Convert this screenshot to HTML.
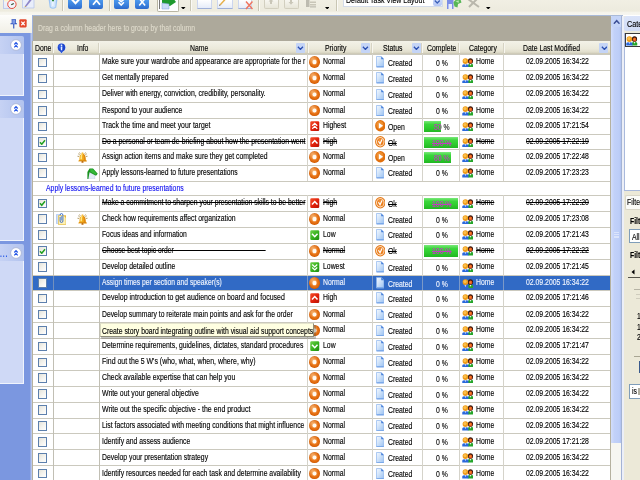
<!DOCTYPE html>
<html><head><meta charset="utf-8"><title>Task View</title>
<style>
html,body{margin:0;padding:0}
body{width:640px;height:480px;overflow:hidden;position:relative;background:#fff;font-family:"Liberation Sans",sans-serif}
.b{position:absolute;display:block}
.t{position:absolute;white-space:pre;font-size:9.0px;line-height:10.0px;transform-origin:0 0;transform:scaleX(0.762);-webkit-text-stroke:.14px}
.s{text-decoration:line-through;text-decoration-thickness:.55px}
.pn{width:10.6px;height:11.6px;border-radius:50%;background:radial-gradient(circle at 30% 26%,rgba(255,225,180,.5),rgba(255,255,255,0) 50%),radial-gradient(closest-side,#fff 0,#fff 30%,#f3a25c 40%,#e9761a 55%,#e0680a 82%,#cf5c07 100%)}
.dc{width:7.2px;height:10.8px;border:.6px solid #6f9fe6;background:linear-gradient(135deg,#f4f9ff 0,#d4e6fa 50%,#9cc3f2 100%)}
.dc i{position:absolute;right:-.6px;top:-.6px;width:0;height:0;border-style:solid;border-width:0 0 3.4px 3.4px;border-color:transparent transparent #5c8fe0 transparent;background:linear-gradient(45deg,transparent 50%,#fff 50%)}
.cb{width:6.8px;height:7.7px;border:1px solid #5d80ad;background:linear-gradient(135deg,#e4e3da 0,#f4f3ee 50%,#fff 100%)}
.fb{width:9px;height:9.5px;background:#c4d4f6;border-radius:1px}
#r{position:absolute;left:0;top:0;width:640px;height:480px;overflow:hidden;will-change:transform;filter:blur(.35px)}
</style></head><body><div id="r">

<div class="b" style="left:0.00px;top:0.00px;width:640.00px;height:10.50px;background:linear-gradient(#f1efe4,#edebde);"></div>
<div class="b" style="left:0.00px;top:10.50px;width:640.00px;height:4.80px;background:linear-gradient(#edebde,#f5f4ec 35%,#f7f6f0);"></div>
<div class="b" style="left:0.00px;top:15.00px;width:32.00px;height:17.50px;background:linear-gradient(#fdfdfb,#f1efe6);"></div>
<div class="b" style="left:0.00px;top:32.50px;width:32.50px;height:448.00px;background:#7b97e0;"></div>
<div class="b" style="left:30.30px;top:32.50px;width:2.20px;height:448.00px;background:linear-gradient(90deg,#8aa2e4,#c9d3ee);"></div>
<div class="b" style="left:0.00px;top:35.50px;width:24.00px;height:18.50px;background:linear-gradient(90deg,#c6d2f4,#b2c3ee);border-radius:0 2px 0 0"></div>
<div class="b" style="left:0.00px;top:54.00px;width:24.00px;height:42.00px;background:#cfd9f6;border-right:1px solid #f0f4fd;border-bottom:1px solid #f0f4fd;box-sizing:border-box"></div>
<div class="b" style="left:0.00px;top:99.50px;width:24.00px;height:18.50px;background:linear-gradient(90deg,#c6d2f4,#b2c3ee);border-radius:0 2px 0 0"></div>
<div class="b" style="left:0.00px;top:118.00px;width:24.00px;height:122.60px;background:#cfd9f6;border-right:1px solid #f0f4fd;border-bottom:1px solid #f0f4fd;box-sizing:border-box"></div>
<div class="b" style="left:0.00px;top:243.50px;width:24.00px;height:17.80px;background:linear-gradient(90deg,#c6d2f4,#b2c3ee);border-radius:0 2px 0 0"></div>
<div class="b" style="left:0.00px;top:261.30px;width:24.00px;height:122.70px;background:#cfd9f6;border-right:1px solid #f0f4fd;border-bottom:1px solid #f0f4fd;box-sizing:border-box"></div>
<svg class="b" style="left:10.00px;top:39.00px" width="12" height="12" viewBox="0 0 24 24"><circle cx="12" cy="12" r="10.8" fill="#fff" stroke="#aab6d6" stroke-width="1.8"/><path d="M8.6 11 L12 7.2 L15.4 11 M8.6 16.6 L12 12.8 L15.4 16.6" fill="none" stroke="#2557e6" stroke-width="2.3"/></svg>
<svg class="b" style="left:10.00px;top:103.00px" width="12" height="12" viewBox="0 0 24 24"><circle cx="12" cy="12" r="10.8" fill="#fff" stroke="#aab6d6" stroke-width="1.8"/><path d="M8.6 11 L12 7.2 L15.4 11 M8.6 16.6 L12 12.8 L15.4 16.6" fill="none" stroke="#2557e6" stroke-width="2.3"/></svg>
<svg class="b" style="left:10.00px;top:247.00px" width="12" height="12" viewBox="0 0 24 24"><circle cx="12" cy="12" r="10.8" fill="#fff" stroke="#aab6d6" stroke-width="1.8"/><path d="M8.6 11 L12 7.2 L15.4 11 M8.6 16.6 L12 12.8 L15.4 16.6" fill="none" stroke="#2557e6" stroke-width="2.3"/></svg>
<span class="t" style="left:0.30px;top:249.28px;color:#2557e6;letter-spacing:1.1px;-webkit-text-stroke:0;font-weight:bold">...</span>
<svg class="b" style="left:9.50px;top:18.50px" width="7.5" height="10" viewBox="0 0 15 20"><path d="M3 1.5 L12 1.5 M4.5 2 L4.5 9 M10.5 2 L10.5 9 M1 9.5 L14 9.5 M7.5 10 L7.5 19" stroke="#2b4fc0" stroke-width="2.2" fill="none"/><rect x="5" y="2" width="5" height="7" fill="#7e9ae6"/></svg>
<svg class="b" style="left:19.30px;top:19.30px" width="8" height="8.6" viewBox="0 0 18 20"><rect x=".5" y=".5" width="17" height="19" rx="2.5" fill="#e4472b"/><path d="M5 6 L13 14.5 M13 6 L5 14.5" stroke="#fff" stroke-width="2.8"/></svg>
<div class="b" style="left:32.00px;top:14.80px;width:591.00px;height:26.70px;background:#ada99b;border-top:1px solid #a9bad8;border-left:1px solid #9fb2dc;box-sizing:border-box"></div>
<span class="t" style="left:38.00px;top:23.38px;color:#dedacb;">Drag a column header here to group by that column</span>
<div class="b" style="left:33.00px;top:41.00px;width:578.00px;height:13.40px;background:linear-gradient(#f3f2e8,#ebe9da 60%,#e0ddcb 85%,#c9c5b2);"></div>
<div class="b" style="left:52.00px;top:43.00px;width:1.00px;height:9.50px;background:#d6d3c3;"></div>
<div class="b" style="left:53.00px;top:43.00px;width:1.00px;height:9.50px;background:#f7f6ef;"></div>
<div class="b" style="left:97.80px;top:43.00px;width:1.00px;height:9.50px;background:#d6d3c3;"></div>
<div class="b" style="left:98.80px;top:43.00px;width:1.00px;height:9.50px;background:#f7f6ef;"></div>
<div class="b" style="left:307.10px;top:43.00px;width:1.00px;height:9.50px;background:#d6d3c3;"></div>
<div class="b" style="left:308.10px;top:43.00px;width:1.00px;height:9.50px;background:#f7f6ef;"></div>
<div class="b" style="left:371.10px;top:43.00px;width:1.00px;height:9.50px;background:#d6d3c3;"></div>
<div class="b" style="left:372.10px;top:43.00px;width:1.00px;height:9.50px;background:#f7f6ef;"></div>
<div class="b" style="left:421.10px;top:43.00px;width:1.00px;height:9.50px;background:#d6d3c3;"></div>
<div class="b" style="left:422.10px;top:43.00px;width:1.00px;height:9.50px;background:#f7f6ef;"></div>
<div class="b" style="left:458.40px;top:43.00px;width:1.00px;height:9.50px;background:#d6d3c3;"></div>
<div class="b" style="left:459.40px;top:43.00px;width:1.00px;height:9.50px;background:#f7f6ef;"></div>
<div class="b" style="left:503.20px;top:43.00px;width:1.00px;height:9.50px;background:#d6d3c3;"></div>
<div class="b" style="left:504.20px;top:43.00px;width:1.00px;height:9.50px;background:#f7f6ef;"></div>
<span class="t" style="left:34.60px;top:43.48px;color:#000;">Done</span>
<span class="t" style="left:76.90px;top:43.48px;color:#000;">Info</span>
<span class="t" style="left:190.00px;top:43.48px;color:#000;">Name</span>
<span class="t" style="left:324.50px;top:43.48px;color:#000;">Priority</span>
<span class="t" style="left:382.50px;top:43.48px;color:#000;">Status</span>
<span class="t" style="left:427.30px;top:43.48px;color:#000;">Complete</span>
<span class="t" style="left:469.20px;top:43.48px;color:#000;">Category</span>
<span class="t" style="left:523.20px;top:43.48px;color:#000;">Date Last Modified</span>
<div class="b fb" style="left:296.00px;top:43.00px"></div>
<svg class="b" style="left:297.20px;top:45.80px" width="6.8" height="4.6" viewBox="0 0 13.6 9.2"><path d="M1.8 1.6 L6.8 6.8 L11.8 1.6" fill="none" stroke="#2a4fb0" stroke-width="2.7"/></svg>
<div class="b fb" style="left:361.00px;top:43.00px"></div>
<svg class="b" style="left:362.20px;top:45.80px" width="6.8" height="4.6" viewBox="0 0 13.6 9.2"><path d="M1.8 1.6 L6.8 6.8 L11.8 1.6" fill="none" stroke="#2a4fb0" stroke-width="2.7"/></svg>
<div class="b fb" style="left:411.60px;top:43.00px"></div>
<svg class="b" style="left:412.80px;top:45.80px" width="6.8" height="4.6" viewBox="0 0 13.6 9.2"><path d="M1.8 1.6 L6.8 6.8 L11.8 1.6" fill="none" stroke="#2a4fb0" stroke-width="2.7"/></svg>
<div class="b fb" style="left:599.30px;top:43.00px"></div>
<svg class="b" style="left:600.50px;top:45.80px" width="6.8" height="4.6" viewBox="0 0 13.6 9.2"><path d="M1.8 1.6 L6.8 6.8 L11.8 1.6" fill="none" stroke="#2a4fb0" stroke-width="2.7"/></svg>
<svg class="b" style="left:55.50px;top:41.80px" width="11" height="12.4" viewBox="0 0 22 24.8"><path d="M11 .5 L21 11.5 L11 24 L1 11.5 Z" fill="#dfe8fb" opacity=".9"/><ellipse cx="11" cy="11" rx="7.6" ry="8" fill="#1c44cc"/><path d="M7 17 L11 23 L15 17 Z" fill="#2a55d6"/><ellipse cx="9.5" cy="9" rx="4.5" ry="5" fill="#3f6be6" opacity=".7"/><rect x="9.6" y="9" width="2.9" height="7.5" rx="1" fill="#e8f0ff"/><rect x="9.6" y="5" width="2.9" height="2.8" rx="1" fill="#e8f0ff"/></svg>
<div class="b" style="left:32.50px;top:54.40px;width:578.00px;height:426.00px;background:#fff;"></div>
<div class="b" style="left:33.00px;top:275.80px;width:577.50px;height:14.60px;background:#316ac5;"></div>
<div class="b" style="left:32.50px;top:54.00px;width:578.00px;height:1.00px;background:#cbc9be;"></div>
<div class="b" style="left:32.50px;top:70.00px;width:578.00px;height:1.00px;background:#cbc9be;"></div>
<div class="b" style="left:32.50px;top:86.00px;width:578.00px;height:1.00px;background:#cbc9be;"></div>
<div class="b" style="left:32.50px;top:102.00px;width:578.00px;height:1.00px;background:#cbc9be;"></div>
<div class="b" style="left:32.50px;top:118.00px;width:578.00px;height:1.00px;background:#cbc9be;"></div>
<div class="b" style="left:32.50px;top:134.00px;width:578.00px;height:1.00px;background:#cbc9be;"></div>
<div class="b" style="left:32.50px;top:149.00px;width:578.00px;height:1.00px;background:#cbc9be;"></div>
<div class="b" style="left:32.50px;top:165.00px;width:578.00px;height:1.00px;background:#cbc9be;"></div>
<div class="b" style="left:32.50px;top:181.00px;width:578.00px;height:1.00px;background:#cbc9be;"></div>
<div class="b" style="left:32.50px;top:195.00px;width:578.00px;height:1.00px;background:#cbc9be;"></div>
<div class="b" style="left:32.50px;top:211.00px;width:578.00px;height:1.00px;background:#cbc9be;"></div>
<div class="b" style="left:32.50px;top:227.00px;width:578.00px;height:1.00px;background:#cbc9be;"></div>
<div class="b" style="left:32.50px;top:243.00px;width:578.00px;height:1.00px;background:#cbc9be;"></div>
<div class="b" style="left:32.50px;top:259.00px;width:578.00px;height:1.00px;background:#cbc9be;"></div>
<div class="b" style="left:32.50px;top:275.00px;width:578.00px;height:1.00px;background:#cbc9be;"></div>
<div class="b" style="left:32.50px;top:290.00px;width:578.00px;height:1.00px;background:#cbc9be;"></div>
<div class="b" style="left:32.50px;top:306.00px;width:578.00px;height:1.00px;background:#cbc9be;"></div>
<div class="b" style="left:32.50px;top:322.00px;width:578.00px;height:1.00px;background:#cbc9be;"></div>
<div class="b" style="left:32.50px;top:338.00px;width:578.00px;height:1.00px;background:#cbc9be;"></div>
<div class="b" style="left:32.50px;top:354.00px;width:578.00px;height:1.00px;background:#cbc9be;"></div>
<div class="b" style="left:32.50px;top:370.00px;width:578.00px;height:1.00px;background:#cbc9be;"></div>
<div class="b" style="left:32.50px;top:386.00px;width:578.00px;height:1.00px;background:#cbc9be;"></div>
<div class="b" style="left:32.50px;top:402.00px;width:578.00px;height:1.00px;background:#cbc9be;"></div>
<div class="b" style="left:32.50px;top:418.00px;width:578.00px;height:1.00px;background:#cbc9be;"></div>
<div class="b" style="left:32.50px;top:433.00px;width:578.00px;height:1.00px;background:#cbc9be;"></div>
<div class="b" style="left:32.50px;top:449.00px;width:578.00px;height:1.00px;background:#cbc9be;"></div>
<div class="b" style="left:32.50px;top:465.00px;width:578.00px;height:1.00px;background:#cbc9be;"></div>
<div class="b" style="left:32.50px;top:481.00px;width:578.00px;height:1.00px;background:#cbc9be;"></div>
<div class="b" style="left:32.00px;top:41.00px;width:1.00px;height:440.00px;background:#b5b19f;"></div>
<div class="b" style="left:53.00px;top:54.40px;width:1.00px;height:126.70px;background:#c1bfb4;"></div>
<div class="b" style="left:53.00px;top:195.40px;width:1.00px;height:284.60px;background:#c1bfb4;"></div>
<div class="b" style="left:99.00px;top:54.40px;width:1.00px;height:126.70px;background:#c1bfb4;"></div>
<div class="b" style="left:99.00px;top:195.40px;width:1.00px;height:284.60px;background:#c1bfb4;"></div>
<div class="b" style="left:307.00px;top:54.40px;width:1.00px;height:126.70px;background:#d5d3ca;"></div>
<div class="b" style="left:307.00px;top:195.40px;width:1.00px;height:284.60px;background:#d5d3ca;"></div>
<div class="b" style="left:372.00px;top:54.40px;width:1.00px;height:126.70px;background:#d5d3ca;"></div>
<div class="b" style="left:372.00px;top:195.40px;width:1.00px;height:284.60px;background:#d5d3ca;"></div>
<div class="b" style="left:422.00px;top:54.40px;width:1.00px;height:126.70px;background:#d5d3ca;"></div>
<div class="b" style="left:422.00px;top:195.40px;width:1.00px;height:284.60px;background:#d5d3ca;"></div>
<div class="b" style="left:459.00px;top:54.40px;width:1.00px;height:126.70px;background:#d5d3ca;"></div>
<div class="b" style="left:459.00px;top:195.40px;width:1.00px;height:284.60px;background:#d5d3ca;"></div>
<div class="b" style="left:503.00px;top:54.40px;width:1.00px;height:126.70px;background:#d5d3ca;"></div>
<div class="b" style="left:503.00px;top:195.40px;width:1.00px;height:284.60px;background:#d5d3ca;"></div>
<div class="b" style="left:610.00px;top:54.40px;width:1.00px;height:126.70px;background:#d5d3ca;"></div>
<div class="b" style="left:610.00px;top:195.40px;width:1.00px;height:284.60px;background:#d5d3ca;"></div>
<div class="b" style="left:610.00px;top:41.00px;width:1.00px;height:440.00px;background:#b5b19f;"></div>
<div class="b" style="left:53.00px;top:276.30px;width:1.00px;height:14.10px;background:rgba(49,106,197,.55);"></div>
<div class="b" style="left:99.00px;top:276.30px;width:1.00px;height:14.10px;background:rgba(49,106,197,.55);"></div>
<div class="b" style="left:307.00px;top:276.30px;width:1.00px;height:14.10px;background:rgba(49,106,197,.55);"></div>
<div class="b" style="left:372.00px;top:276.30px;width:1.00px;height:14.10px;background:rgba(49,106,197,.55);"></div>
<div class="b" style="left:422.00px;top:276.30px;width:1.00px;height:14.10px;background:rgba(49,106,197,.55);"></div>
<div class="b" style="left:459.00px;top:276.30px;width:1.00px;height:14.10px;background:rgba(49,106,197,.55);"></div>
<div class="b" style="left:503.00px;top:276.30px;width:1.00px;height:14.10px;background:rgba(49,106,197,.55);"></div>
<span class="t" style="left:46.20px;top:183.38px;color:#1414f0;">Apply lessons-learned to future presentations</span>
<div class="b cb" style="left:38.20px;top:57.50px"></div>
<span class="t" style="left:101.90px;top:56.28px;color:#000;transform:scaleX(0.7628);">Make sure your wardrobe and appearance are appropriate for the r</span>
<div class="b pn" style="left:309.40px;top:56.30px"></div>
<span class="t" style="left:323.00px;top:56.28px;color:#000;">Normal</span>
<svg class="b" style="left:376.00px;top:56.30px" width="8.4" height="11.6" viewBox="0 0 16.8 23.2"><linearGradient id="d376_56" x1="0" y1="0" x2="1" y2="1"><stop offset="0" stop-color="#f4f9ff"/><stop offset=".4" stop-color="#d3e5fa"/><stop offset="1" stop-color="#98c0f1"/></linearGradient><path d="M1 1 L10.5 1 L15.8 6.5 L15.8 22.2 L1 22.2 Z" fill="url(#d376_56)" stroke="#8db4ec" stroke-width="1.4"/><path d="M10.5 1 L15.8 6.5 L10.5 6.5 Z" fill="#3f7bd8"/><path d="M1.5 21.6 L15.3 21.6" stroke="#5d93e2" stroke-width="1.6"/></svg>
<span class="t" style="left:387.60px;top:57.78px;color:#000;">Created</span>
<span class="t" style="left:435.60px;top:57.78px;color:#000;">0 %</span>
<svg class="b" style="left:461.70px;top:57.70px" width="11.5" height="9.6" viewBox="0 0 23 19.2"><path d="M11.5 19 L11.5 15 Q11.5 11.5 17 11.5 Q22.5 11.5 22.5 15 L22.5 19 Z" fill="#25a52a"/><path d="M15.3 12 L17 15.5 L18.7 12 Z" fill="#e8f6e8"/><ellipse cx="17" cy="6" rx="5.2" ry="5.7" fill="#34160a"/><ellipse cx="17.2" cy="7.2" rx="3.4" ry="4" fill="#e5561a"/><ellipse cx="16.6" cy="6.4" rx="1.8" ry="2.1" fill="#f4842e"/><path d="M.5 19 L.5 15.5 Q.5 12 6.8 12 Q13 12 13 15.5 L13 19 Z" fill="#2a68dc"/><path d="M5 12.4 L6.8 16.2 L8.6 12.4 Z" fill="#e6eefc"/><ellipse cx="6.8" cy="6.2" rx="5.6" ry="5.9" fill="#ee9a18"/><ellipse cx="6" cy="5.2" rx="3.2" ry="3.4" fill="#fbc04c"/></svg>
<span class="t" style="left:475.60px;top:56.28px;color:#000;">Home</span>
<span class="t" style="left:525.60px;top:56.28px;color:#000;">02.09.2005 16:34:22</span>
<div class="b cb" style="left:38.20px;top:73.50px"></div>
<span class="t" style="left:101.90px;top:72.28px;color:#000;transform:scaleX(0.7479);">Get mentally prepared</span>
<div class="b pn" style="left:309.40px;top:72.30px"></div>
<span class="t" style="left:323.00px;top:72.28px;color:#000;">Normal</span>
<svg class="b" style="left:376.00px;top:72.30px" width="8.4" height="11.6" viewBox="0 0 16.8 23.2"><linearGradient id="d376_72" x1="0" y1="0" x2="1" y2="1"><stop offset="0" stop-color="#f4f9ff"/><stop offset=".4" stop-color="#d3e5fa"/><stop offset="1" stop-color="#98c0f1"/></linearGradient><path d="M1 1 L10.5 1 L15.8 6.5 L15.8 22.2 L1 22.2 Z" fill="url(#d376_72)" stroke="#8db4ec" stroke-width="1.4"/><path d="M10.5 1 L15.8 6.5 L10.5 6.5 Z" fill="#3f7bd8"/><path d="M1.5 21.6 L15.3 21.6" stroke="#5d93e2" stroke-width="1.6"/></svg>
<span class="t" style="left:387.60px;top:73.78px;color:#000;">Created</span>
<span class="t" style="left:435.60px;top:73.78px;color:#000;">0 %</span>
<svg class="b" style="left:461.70px;top:73.70px" width="11.5" height="9.6" viewBox="0 0 23 19.2"><path d="M11.5 19 L11.5 15 Q11.5 11.5 17 11.5 Q22.5 11.5 22.5 15 L22.5 19 Z" fill="#25a52a"/><path d="M15.3 12 L17 15.5 L18.7 12 Z" fill="#e8f6e8"/><ellipse cx="17" cy="6" rx="5.2" ry="5.7" fill="#34160a"/><ellipse cx="17.2" cy="7.2" rx="3.4" ry="4" fill="#e5561a"/><ellipse cx="16.6" cy="6.4" rx="1.8" ry="2.1" fill="#f4842e"/><path d="M.5 19 L.5 15.5 Q.5 12 6.8 12 Q13 12 13 15.5 L13 19 Z" fill="#2a68dc"/><path d="M5 12.4 L6.8 16.2 L8.6 12.4 Z" fill="#e6eefc"/><ellipse cx="6.8" cy="6.2" rx="5.6" ry="5.9" fill="#ee9a18"/><ellipse cx="6" cy="5.2" rx="3.2" ry="3.4" fill="#fbc04c"/></svg>
<span class="t" style="left:475.60px;top:72.28px;color:#000;">Home</span>
<span class="t" style="left:525.60px;top:72.28px;color:#000;">02.09.2005 16:34:22</span>
<div class="b cb" style="left:38.20px;top:89.70px"></div>
<span class="t" style="left:101.90px;top:88.48px;color:#000;transform:scaleX(0.7673);">Deliver with energy, conviction, credibility, personality.</span>
<div class="b pn" style="left:309.40px;top:88.50px"></div>
<span class="t" style="left:323.00px;top:88.48px;color:#000;">Normal</span>
<svg class="b" style="left:376.00px;top:88.50px" width="8.4" height="11.6" viewBox="0 0 16.8 23.2"><linearGradient id="d376_88" x1="0" y1="0" x2="1" y2="1"><stop offset="0" stop-color="#f4f9ff"/><stop offset=".4" stop-color="#d3e5fa"/><stop offset="1" stop-color="#98c0f1"/></linearGradient><path d="M1 1 L10.5 1 L15.8 6.5 L15.8 22.2 L1 22.2 Z" fill="url(#d376_88)" stroke="#8db4ec" stroke-width="1.4"/><path d="M10.5 1 L15.8 6.5 L10.5 6.5 Z" fill="#3f7bd8"/><path d="M1.5 21.6 L15.3 21.6" stroke="#5d93e2" stroke-width="1.6"/></svg>
<span class="t" style="left:387.60px;top:89.98px;color:#000;">Created</span>
<span class="t" style="left:435.60px;top:89.98px;color:#000;">0 %</span>
<svg class="b" style="left:461.70px;top:89.90px" width="11.5" height="9.6" viewBox="0 0 23 19.2"><path d="M11.5 19 L11.5 15 Q11.5 11.5 17 11.5 Q22.5 11.5 22.5 15 L22.5 19 Z" fill="#25a52a"/><path d="M15.3 12 L17 15.5 L18.7 12 Z" fill="#e8f6e8"/><ellipse cx="17" cy="6" rx="5.2" ry="5.7" fill="#34160a"/><ellipse cx="17.2" cy="7.2" rx="3.4" ry="4" fill="#e5561a"/><ellipse cx="16.6" cy="6.4" rx="1.8" ry="2.1" fill="#f4842e"/><path d="M.5 19 L.5 15.5 Q.5 12 6.8 12 Q13 12 13 15.5 L13 19 Z" fill="#2a68dc"/><path d="M5 12.4 L6.8 16.2 L8.6 12.4 Z" fill="#e6eefc"/><ellipse cx="6.8" cy="6.2" rx="5.6" ry="5.9" fill="#ee9a18"/><ellipse cx="6" cy="5.2" rx="3.2" ry="3.4" fill="#fbc04c"/></svg>
<span class="t" style="left:475.60px;top:88.48px;color:#000;">Home</span>
<span class="t" style="left:525.60px;top:88.48px;color:#000;">02.09.2005 16:34:22</span>
<div class="b cb" style="left:38.20px;top:105.85px"></div>
<span class="t" style="left:101.90px;top:104.63px;color:#000;transform:scaleX(0.7642);">Respond to your audience</span>
<div class="b pn" style="left:309.40px;top:104.65px"></div>
<span class="t" style="left:323.00px;top:104.63px;color:#000;">Normal</span>
<svg class="b" style="left:376.00px;top:104.65px" width="8.4" height="11.6" viewBox="0 0 16.8 23.2"><linearGradient id="d376_104" x1="0" y1="0" x2="1" y2="1"><stop offset="0" stop-color="#f4f9ff"/><stop offset=".4" stop-color="#d3e5fa"/><stop offset="1" stop-color="#98c0f1"/></linearGradient><path d="M1 1 L10.5 1 L15.8 6.5 L15.8 22.2 L1 22.2 Z" fill="url(#d376_104)" stroke="#8db4ec" stroke-width="1.4"/><path d="M10.5 1 L15.8 6.5 L10.5 6.5 Z" fill="#3f7bd8"/><path d="M1.5 21.6 L15.3 21.6" stroke="#5d93e2" stroke-width="1.6"/></svg>
<span class="t" style="left:387.60px;top:106.13px;color:#000;">Created</span>
<span class="t" style="left:435.60px;top:106.13px;color:#000;">0 %</span>
<svg class="b" style="left:461.70px;top:106.05px" width="11.5" height="9.6" viewBox="0 0 23 19.2"><path d="M11.5 19 L11.5 15 Q11.5 11.5 17 11.5 Q22.5 11.5 22.5 15 L22.5 19 Z" fill="#25a52a"/><path d="M15.3 12 L17 15.5 L18.7 12 Z" fill="#e8f6e8"/><ellipse cx="17" cy="6" rx="5.2" ry="5.7" fill="#34160a"/><ellipse cx="17.2" cy="7.2" rx="3.4" ry="4" fill="#e5561a"/><ellipse cx="16.6" cy="6.4" rx="1.8" ry="2.1" fill="#f4842e"/><path d="M.5 19 L.5 15.5 Q.5 12 6.8 12 Q13 12 13 15.5 L13 19 Z" fill="#2a68dc"/><path d="M5 12.4 L6.8 16.2 L8.6 12.4 Z" fill="#e6eefc"/><ellipse cx="6.8" cy="6.2" rx="5.6" ry="5.9" fill="#ee9a18"/><ellipse cx="6" cy="5.2" rx="3.2" ry="3.4" fill="#fbc04c"/></svg>
<span class="t" style="left:475.60px;top:104.63px;color:#000;">Home</span>
<span class="t" style="left:525.60px;top:104.63px;color:#000;">02.09.2005 16:34:22</span>
<div class="b cb" style="left:38.20px;top:121.50px"></div>
<span class="t" style="left:101.90px;top:120.28px;color:#000;transform:scaleX(0.7628);">Track the time and meet your target</span>
<svg class="b" style="left:310.00px;top:120.90px" width="9.5" height="10.25" viewBox="0 0 19 20.5"><linearGradient id="ghighest310120" x1="0" y1="0" x2="1" y2="1"><stop offset="0" stop-color="#f4502c"/><stop offset=".55" stop-color="#e0200a"/><stop offset="1" stop-color="#b81405"/></linearGradient><rect x=".5" y=".5" width="18" height="19.5" rx="2.5" fill="url(#ghighest310120)"/><path d="M4.5 9.5 L9.5 4.5 L14.5 9.5 M4.5 15.5 L9.5 10.5 L14.5 15.5" fill="none" stroke="#fff" stroke-width="2.4"/></svg>
<span class="t" style="left:323.00px;top:120.28px;color:#000;">Highest</span>
<svg class="b" style="left:374.60px;top:120.30px" width="10.6" height="11.6" viewBox="0 0 21 23"><ellipse cx="10.5" cy="11.5" rx="10.3" ry="11.3" fill="#e2700d"/><ellipse cx="9.5" cy="9.5" rx="7" ry="7.5" fill="#f39a3c" opacity=".7"/><path d="M7.5 5.5 L16 11.5 L7.5 17.5 Z" fill="#fff"/></svg>
<span class="t" style="left:387.60px;top:121.78px;color:#000;">Open</span>
<span class="t" style="left:433.60px;top:121.78px;color:#111;">50 %</span>
<div class="b" style="left:424.20px;top:120.70px;width:16.8px;height:11.4px;overflow:hidden;background:linear-gradient(#7ae87a,#3ad63a 30%,#2fcd2f 60%,#22b622)"><span class="t" style="left:9.40px;top:1.08px;color:#c23cc0">50 %</span></div>
<svg class="b" style="left:461.70px;top:121.70px" width="11.5" height="9.6" viewBox="0 0 23 19.2"><path d="M11.5 19 L11.5 15 Q11.5 11.5 17 11.5 Q22.5 11.5 22.5 15 L22.5 19 Z" fill="#25a52a"/><path d="M15.3 12 L17 15.5 L18.7 12 Z" fill="#e8f6e8"/><ellipse cx="17" cy="6" rx="5.2" ry="5.7" fill="#34160a"/><ellipse cx="17.2" cy="7.2" rx="3.4" ry="4" fill="#e5561a"/><ellipse cx="16.6" cy="6.4" rx="1.8" ry="2.1" fill="#f4842e"/><path d="M.5 19 L.5 15.5 Q.5 12 6.8 12 Q13 12 13 15.5 L13 19 Z" fill="#2a68dc"/><path d="M5 12.4 L6.8 16.2 L8.6 12.4 Z" fill="#e6eefc"/><ellipse cx="6.8" cy="6.2" rx="5.6" ry="5.9" fill="#ee9a18"/><ellipse cx="6" cy="5.2" rx="3.2" ry="3.4" fill="#fbc04c"/></svg>
<span class="t" style="left:475.60px;top:120.28px;color:#000;">Home</span>
<span class="t" style="left:525.60px;top:120.28px;color:#000;">02.09.2005 17:21:54</span>
<div class="b cb" style="left:38.20px;top:137.30px"></div>
<svg class="b" style="left:39.40px;top:138.80px" width="7" height="6.5" viewBox="0 0 14 13"><path d="M2 6.5 L5.5 10.5 L12 2.5" fill="none" stroke="#21a121" stroke-width="3"/></svg>
<span class="t s" style="left:101.90px;top:136.08px;color:#000;transform:scaleX(0.7627);">Do a personal or team de-briefing about how the presentation went</span>
<svg class="b" style="left:310.00px;top:136.70px" width="9.5" height="10.25" viewBox="0 0 19 20.5"><linearGradient id="ghigh310136" x1="0" y1="0" x2="1" y2="1"><stop offset="0" stop-color="#f4502c"/><stop offset=".55" stop-color="#e0200a"/><stop offset="1" stop-color="#b81405"/></linearGradient><rect x=".5" y=".5" width="18" height="19.5" rx="2.5" fill="url(#ghigh310136)"/><path d="M4 13 L9.5 7 L15 13" fill="none" stroke="#fff" stroke-width="3"/></svg>
<span class="t s" style="left:323.00px;top:136.08px;color:#000;">High</span>
<svg class="b" style="left:374.60px;top:136.10px" width="10.6" height="11.6" viewBox="0 0 21 23"><ellipse cx="10.5" cy="11.5" rx="9.3" ry="10.3" fill="#fff4e6" stroke="#e67a18" stroke-width="2.2"/><ellipse cx="10.5" cy="11.5" rx="6.6" ry="7.4" fill="#eb7f1e"/><ellipse cx="9.5" cy="10" rx="3.6" ry="4" fill="#f39a44" opacity=".6"/><path d="M6.8 10.5 L10 15.5 L14.2 6.5" fill="none" stroke="#fff" stroke-width="2.3"/></svg>
<span class="t s" style="left:387.60px;top:137.58px;color:#000;">Ok</span>
<span class="t s" style="left:431.60px;top:137.58px;color:#111;">100 %</span>
<div class="b" style="left:424.20px;top:136.50px;width:34px;height:11.4px;overflow:hidden;background:linear-gradient(#7ae87a,#3ad63a 30%,#2fcd2f 60%,#22b622)"><span class="t s" style="left:7.40px;top:1.08px;color:#c23cc0">100 %</span></div>
<svg class="b" style="left:461.70px;top:137.50px" width="11.5" height="9.6" viewBox="0 0 23 19.2"><path d="M11.5 19 L11.5 15 Q11.5 11.5 17 11.5 Q22.5 11.5 22.5 15 L22.5 19 Z" fill="#25a52a"/><path d="M15.3 12 L17 15.5 L18.7 12 Z" fill="#e8f6e8"/><ellipse cx="17" cy="6" rx="5.2" ry="5.7" fill="#34160a"/><ellipse cx="17.2" cy="7.2" rx="3.4" ry="4" fill="#e5561a"/><ellipse cx="16.6" cy="6.4" rx="1.8" ry="2.1" fill="#f4842e"/><path d="M.5 19 L.5 15.5 Q.5 12 6.8 12 Q13 12 13 15.5 L13 19 Z" fill="#2a68dc"/><path d="M5 12.4 L6.8 16.2 L8.6 12.4 Z" fill="#e6eefc"/><ellipse cx="6.8" cy="6.2" rx="5.6" ry="5.9" fill="#ee9a18"/><ellipse cx="6" cy="5.2" rx="3.2" ry="3.4" fill="#fbc04c"/></svg>
<span class="t s" style="left:475.60px;top:136.08px;color:#000;">Home</span>
<span class="t s" style="left:525.60px;top:136.08px;color:#000;">02.09.2005 17:22:19</span>
<div class="b cb" style="left:38.20px;top:152.60px"></div>
<span class="t" style="left:101.90px;top:151.38px;color:#000;transform:scaleX(0.7592);">Assign action items and make sure they get completed</span>
<div class="b pn" style="left:309.40px;top:151.40px"></div>
<span class="t" style="left:323.00px;top:151.38px;color:#000;">Normal</span>
<svg class="b" style="left:374.60px;top:151.40px" width="10.6" height="11.6" viewBox="0 0 21 23"><ellipse cx="10.5" cy="11.5" rx="10.3" ry="11.3" fill="#e2700d"/><ellipse cx="9.5" cy="9.5" rx="7" ry="7.5" fill="#f39a3c" opacity=".7"/><path d="M7.5 5.5 L16 11.5 L7.5 17.5 Z" fill="#fff"/></svg>
<span class="t" style="left:387.60px;top:152.88px;color:#000;">Open</span>
<span class="t" style="left:434.00px;top:152.88px;color:#111;">80 %</span>
<div class="b" style="left:424.20px;top:151.80px;width:27px;height:11.4px;overflow:hidden;background:linear-gradient(#7ae87a,#3ad63a 30%,#2fcd2f 60%,#22b622)"><span class="t" style="left:9.80px;top:1.08px;color:#c23cc0">80 %</span></div>
<svg class="b" style="left:461.70px;top:152.80px" width="11.5" height="9.6" viewBox="0 0 23 19.2"><path d="M11.5 19 L11.5 15 Q11.5 11.5 17 11.5 Q22.5 11.5 22.5 15 L22.5 19 Z" fill="#25a52a"/><path d="M15.3 12 L17 15.5 L18.7 12 Z" fill="#e8f6e8"/><ellipse cx="17" cy="6" rx="5.2" ry="5.7" fill="#34160a"/><ellipse cx="17.2" cy="7.2" rx="3.4" ry="4" fill="#e5561a"/><ellipse cx="16.6" cy="6.4" rx="1.8" ry="2.1" fill="#f4842e"/><path d="M.5 19 L.5 15.5 Q.5 12 6.8 12 Q13 12 13 15.5 L13 19 Z" fill="#2a68dc"/><path d="M5 12.4 L6.8 16.2 L8.6 12.4 Z" fill="#e6eefc"/><ellipse cx="6.8" cy="6.2" rx="5.6" ry="5.9" fill="#ee9a18"/><ellipse cx="6" cy="5.2" rx="3.2" ry="3.4" fill="#fbc04c"/></svg>
<span class="t" style="left:475.60px;top:151.38px;color:#000;">Home</span>
<span class="t" style="left:525.60px;top:151.38px;color:#000;">02.09.2005 17:22:48</span>
<div class="b cb" style="left:38.20px;top:168.20px"></div>
<span class="t" style="left:101.90px;top:166.98px;color:#000;transform:scaleX(0.7513);">Apply lessons-learned to future presentations</span>
<div class="b pn" style="left:309.40px;top:167.00px"></div>
<span class="t" style="left:323.00px;top:166.98px;color:#000;">Normal</span>
<svg class="b" style="left:376.00px;top:167.00px" width="8.4" height="11.6" viewBox="0 0 16.8 23.2"><linearGradient id="d376_167" x1="0" y1="0" x2="1" y2="1"><stop offset="0" stop-color="#f4f9ff"/><stop offset=".4" stop-color="#d3e5fa"/><stop offset="1" stop-color="#98c0f1"/></linearGradient><path d="M1 1 L10.5 1 L15.8 6.5 L15.8 22.2 L1 22.2 Z" fill="url(#d376_167)" stroke="#8db4ec" stroke-width="1.4"/><path d="M10.5 1 L15.8 6.5 L10.5 6.5 Z" fill="#3f7bd8"/><path d="M1.5 21.6 L15.3 21.6" stroke="#5d93e2" stroke-width="1.6"/></svg>
<span class="t" style="left:387.60px;top:168.48px;color:#000;">Created</span>
<span class="t" style="left:435.60px;top:168.48px;color:#000;">0 %</span>
<svg class="b" style="left:461.70px;top:168.40px" width="11.5" height="9.6" viewBox="0 0 23 19.2"><path d="M11.5 19 L11.5 15 Q11.5 11.5 17 11.5 Q22.5 11.5 22.5 15 L22.5 19 Z" fill="#25a52a"/><path d="M15.3 12 L17 15.5 L18.7 12 Z" fill="#e8f6e8"/><ellipse cx="17" cy="6" rx="5.2" ry="5.7" fill="#34160a"/><ellipse cx="17.2" cy="7.2" rx="3.4" ry="4" fill="#e5561a"/><ellipse cx="16.6" cy="6.4" rx="1.8" ry="2.1" fill="#f4842e"/><path d="M.5 19 L.5 15.5 Q.5 12 6.8 12 Q13 12 13 15.5 L13 19 Z" fill="#2a68dc"/><path d="M5 12.4 L6.8 16.2 L8.6 12.4 Z" fill="#e6eefc"/><ellipse cx="6.8" cy="6.2" rx="5.6" ry="5.9" fill="#ee9a18"/><ellipse cx="6" cy="5.2" rx="3.2" ry="3.4" fill="#fbc04c"/></svg>
<span class="t" style="left:475.60px;top:166.98px;color:#000;">Home</span>
<span class="t" style="left:525.60px;top:166.98px;color:#000;">02.09.2005 17:23:23</span>
<div class="b cb" style="left:38.20px;top:198.50px"></div>
<svg class="b" style="left:39.40px;top:200.00px" width="7" height="6.5" viewBox="0 0 14 13"><path d="M2 6.5 L5.5 10.5 L12 2.5" fill="none" stroke="#21a121" stroke-width="3"/></svg>
<span class="t s" style="left:101.90px;top:197.28px;color:#000;transform:scaleX(0.7586);">Make a commitment to sharpen your presentation skills to be better</span>
<svg class="b" style="left:310.00px;top:197.90px" width="9.5" height="10.25" viewBox="0 0 19 20.5"><linearGradient id="ghigh310197" x1="0" y1="0" x2="1" y2="1"><stop offset="0" stop-color="#f4502c"/><stop offset=".55" stop-color="#e0200a"/><stop offset="1" stop-color="#b81405"/></linearGradient><rect x=".5" y=".5" width="18" height="19.5" rx="2.5" fill="url(#ghigh310197)"/><path d="M4 13 L9.5 7 L15 13" fill="none" stroke="#fff" stroke-width="3"/></svg>
<span class="t s" style="left:323.00px;top:197.28px;color:#000;">High</span>
<svg class="b" style="left:374.60px;top:197.30px" width="10.6" height="11.6" viewBox="0 0 21 23"><ellipse cx="10.5" cy="11.5" rx="9.3" ry="10.3" fill="#fff4e6" stroke="#e67a18" stroke-width="2.2"/><ellipse cx="10.5" cy="11.5" rx="6.6" ry="7.4" fill="#eb7f1e"/><ellipse cx="9.5" cy="10" rx="3.6" ry="4" fill="#f39a44" opacity=".6"/><path d="M6.8 10.5 L10 15.5 L14.2 6.5" fill="none" stroke="#fff" stroke-width="2.3"/></svg>
<span class="t s" style="left:387.60px;top:198.78px;color:#000;">Ok</span>
<span class="t s" style="left:431.60px;top:198.78px;color:#111;">100 %</span>
<div class="b" style="left:424.20px;top:197.70px;width:34px;height:11.4px;overflow:hidden;background:linear-gradient(#7ae87a,#3ad63a 30%,#2fcd2f 60%,#22b622)"><span class="t s" style="left:7.40px;top:1.08px;color:#c23cc0">100 %</span></div>
<svg class="b" style="left:461.70px;top:198.70px" width="11.5" height="9.6" viewBox="0 0 23 19.2"><path d="M11.5 19 L11.5 15 Q11.5 11.5 17 11.5 Q22.5 11.5 22.5 15 L22.5 19 Z" fill="#25a52a"/><path d="M15.3 12 L17 15.5 L18.7 12 Z" fill="#e8f6e8"/><ellipse cx="17" cy="6" rx="5.2" ry="5.7" fill="#34160a"/><ellipse cx="17.2" cy="7.2" rx="3.4" ry="4" fill="#e5561a"/><ellipse cx="16.6" cy="6.4" rx="1.8" ry="2.1" fill="#f4842e"/><path d="M.5 19 L.5 15.5 Q.5 12 6.8 12 Q13 12 13 15.5 L13 19 Z" fill="#2a68dc"/><path d="M5 12.4 L6.8 16.2 L8.6 12.4 Z" fill="#e6eefc"/><ellipse cx="6.8" cy="6.2" rx="5.6" ry="5.9" fill="#ee9a18"/><ellipse cx="6" cy="5.2" rx="3.2" ry="3.4" fill="#fbc04c"/></svg>
<span class="t s" style="left:475.60px;top:197.28px;color:#000;">Home</span>
<span class="t s" style="left:525.60px;top:197.28px;color:#000;">02.09.2005 17:22:20</span>
<div class="b cb" style="left:38.20px;top:214.30px"></div>
<span class="t" style="left:101.90px;top:213.08px;color:#000;transform:scaleX(0.7615);">Check how requirements affect organization</span>
<div class="b pn" style="left:309.40px;top:213.10px"></div>
<span class="t" style="left:323.00px;top:213.08px;color:#000;">Normal</span>
<svg class="b" style="left:376.00px;top:213.10px" width="8.4" height="11.6" viewBox="0 0 16.8 23.2"><linearGradient id="d376_213" x1="0" y1="0" x2="1" y2="1"><stop offset="0" stop-color="#f4f9ff"/><stop offset=".4" stop-color="#d3e5fa"/><stop offset="1" stop-color="#98c0f1"/></linearGradient><path d="M1 1 L10.5 1 L15.8 6.5 L15.8 22.2 L1 22.2 Z" fill="url(#d376_213)" stroke="#8db4ec" stroke-width="1.4"/><path d="M10.5 1 L15.8 6.5 L10.5 6.5 Z" fill="#3f7bd8"/><path d="M1.5 21.6 L15.3 21.6" stroke="#5d93e2" stroke-width="1.6"/></svg>
<span class="t" style="left:387.60px;top:214.58px;color:#000;">Created</span>
<span class="t" style="left:435.60px;top:214.58px;color:#000;">0 %</span>
<svg class="b" style="left:461.70px;top:214.50px" width="11.5" height="9.6" viewBox="0 0 23 19.2"><path d="M11.5 19 L11.5 15 Q11.5 11.5 17 11.5 Q22.5 11.5 22.5 15 L22.5 19 Z" fill="#25a52a"/><path d="M15.3 12 L17 15.5 L18.7 12 Z" fill="#e8f6e8"/><ellipse cx="17" cy="6" rx="5.2" ry="5.7" fill="#34160a"/><ellipse cx="17.2" cy="7.2" rx="3.4" ry="4" fill="#e5561a"/><ellipse cx="16.6" cy="6.4" rx="1.8" ry="2.1" fill="#f4842e"/><path d="M.5 19 L.5 15.5 Q.5 12 6.8 12 Q13 12 13 15.5 L13 19 Z" fill="#2a68dc"/><path d="M5 12.4 L6.8 16.2 L8.6 12.4 Z" fill="#e6eefc"/><ellipse cx="6.8" cy="6.2" rx="5.6" ry="5.9" fill="#ee9a18"/><ellipse cx="6" cy="5.2" rx="3.2" ry="3.4" fill="#fbc04c"/></svg>
<span class="t" style="left:475.60px;top:213.08px;color:#000;">Home</span>
<span class="t" style="left:525.60px;top:213.08px;color:#000;">02.09.2005 17:23:08</span>
<div class="b cb" style="left:38.20px;top:230.20px"></div>
<span class="t" style="left:101.90px;top:228.98px;color:#000;transform:scaleX(0.75);">Focus ideas and information</span>
<svg class="b" style="left:310.00px;top:229.60px" width="9.5" height="10.25" viewBox="0 0 19 20.5"><linearGradient id="glow310229" x1="0" y1="0" x2="1" y2="1"><stop offset="0" stop-color="#6fd24a"/><stop offset=".55" stop-color="#35b01c"/><stop offset="1" stop-color="#1f8a10"/></linearGradient><rect x=".5" y=".5" width="18" height="19.5" rx="2.5" fill="url(#glow310229)"/><path d="M4 7.5 L9.5 13.5 L15 7.5" fill="none" stroke="#fff" stroke-width="3"/></svg>
<span class="t" style="left:323.00px;top:228.98px;color:#000;">Low</span>
<svg class="b" style="left:376.00px;top:229.00px" width="8.4" height="11.6" viewBox="0 0 16.8 23.2"><linearGradient id="d376_229" x1="0" y1="0" x2="1" y2="1"><stop offset="0" stop-color="#f4f9ff"/><stop offset=".4" stop-color="#d3e5fa"/><stop offset="1" stop-color="#98c0f1"/></linearGradient><path d="M1 1 L10.5 1 L15.8 6.5 L15.8 22.2 L1 22.2 Z" fill="url(#d376_229)" stroke="#8db4ec" stroke-width="1.4"/><path d="M10.5 1 L15.8 6.5 L10.5 6.5 Z" fill="#3f7bd8"/><path d="M1.5 21.6 L15.3 21.6" stroke="#5d93e2" stroke-width="1.6"/></svg>
<span class="t" style="left:387.60px;top:230.48px;color:#000;">Created</span>
<span class="t" style="left:435.60px;top:230.48px;color:#000;">0 %</span>
<svg class="b" style="left:461.70px;top:230.40px" width="11.5" height="9.6" viewBox="0 0 23 19.2"><path d="M11.5 19 L11.5 15 Q11.5 11.5 17 11.5 Q22.5 11.5 22.5 15 L22.5 19 Z" fill="#25a52a"/><path d="M15.3 12 L17 15.5 L18.7 12 Z" fill="#e8f6e8"/><ellipse cx="17" cy="6" rx="5.2" ry="5.7" fill="#34160a"/><ellipse cx="17.2" cy="7.2" rx="3.4" ry="4" fill="#e5561a"/><ellipse cx="16.6" cy="6.4" rx="1.8" ry="2.1" fill="#f4842e"/><path d="M.5 19 L.5 15.5 Q.5 12 6.8 12 Q13 12 13 15.5 L13 19 Z" fill="#2a68dc"/><path d="M5 12.4 L6.8 16.2 L8.6 12.4 Z" fill="#e6eefc"/><ellipse cx="6.8" cy="6.2" rx="5.6" ry="5.9" fill="#ee9a18"/><ellipse cx="6" cy="5.2" rx="3.2" ry="3.4" fill="#fbc04c"/></svg>
<span class="t" style="left:475.60px;top:228.98px;color:#000;">Home</span>
<span class="t" style="left:525.60px;top:228.98px;color:#000;">02.09.2005 17:21:43</span>
<div class="b cb" style="left:38.20px;top:246.20px"></div>
<svg class="b" style="left:39.40px;top:247.70px" width="7" height="6.5" viewBox="0 0 14 13"><path d="M2 6.5 L5.5 10.5 L12 2.5" fill="none" stroke="#21a121" stroke-width="3"/></svg>
<span class="t s" style="left:101.90px;top:244.98px;color:#000;transform:scaleX(0.7503);">Choose best topic order                                                 </span>
<div class="b pn" style="left:309.40px;top:245.00px"></div>
<span class="t s" style="left:323.00px;top:244.98px;color:#000;">Normal</span>
<svg class="b" style="left:374.60px;top:245.00px" width="10.6" height="11.6" viewBox="0 0 21 23"><ellipse cx="10.5" cy="11.5" rx="9.3" ry="10.3" fill="#fff4e6" stroke="#e67a18" stroke-width="2.2"/><ellipse cx="10.5" cy="11.5" rx="6.6" ry="7.4" fill="#eb7f1e"/><ellipse cx="9.5" cy="10" rx="3.6" ry="4" fill="#f39a44" opacity=".6"/><path d="M6.8 10.5 L10 15.5 L14.2 6.5" fill="none" stroke="#fff" stroke-width="2.3"/></svg>
<span class="t s" style="left:387.60px;top:246.48px;color:#000;">Ok</span>
<span class="t s" style="left:431.60px;top:246.48px;color:#111;">100 %</span>
<div class="b" style="left:424.20px;top:245.40px;width:34px;height:11.4px;overflow:hidden;background:linear-gradient(#7ae87a,#3ad63a 30%,#2fcd2f 60%,#22b622)"><span class="t s" style="left:7.40px;top:1.08px;color:#c23cc0">100 %</span></div>
<svg class="b" style="left:461.70px;top:246.40px" width="11.5" height="9.6" viewBox="0 0 23 19.2"><path d="M11.5 19 L11.5 15 Q11.5 11.5 17 11.5 Q22.5 11.5 22.5 15 L22.5 19 Z" fill="#25a52a"/><path d="M15.3 12 L17 15.5 L18.7 12 Z" fill="#e8f6e8"/><ellipse cx="17" cy="6" rx="5.2" ry="5.7" fill="#34160a"/><ellipse cx="17.2" cy="7.2" rx="3.4" ry="4" fill="#e5561a"/><ellipse cx="16.6" cy="6.4" rx="1.8" ry="2.1" fill="#f4842e"/><path d="M.5 19 L.5 15.5 Q.5 12 6.8 12 Q13 12 13 15.5 L13 19 Z" fill="#2a68dc"/><path d="M5 12.4 L6.8 16.2 L8.6 12.4 Z" fill="#e6eefc"/><ellipse cx="6.8" cy="6.2" rx="5.6" ry="5.9" fill="#ee9a18"/><ellipse cx="6" cy="5.2" rx="3.2" ry="3.4" fill="#fbc04c"/></svg>
<span class="t s" style="left:475.60px;top:244.98px;color:#000;">Home</span>
<span class="t s" style="left:525.60px;top:244.98px;color:#000;">02.09.2005 17:22:22</span>
<div class="b cb" style="left:38.20px;top:262.40px"></div>
<span class="t" style="left:101.90px;top:261.18px;color:#000;transform:scaleX(0.764);">Develop detailed outline</span>
<svg class="b" style="left:310.00px;top:261.80px" width="9.5" height="10.25" viewBox="0 0 19 20.5"><linearGradient id="glowest310261" x1="0" y1="0" x2="1" y2="1"><stop offset="0" stop-color="#6fd24a"/><stop offset=".55" stop-color="#35b01c"/><stop offset="1" stop-color="#1f8a10"/></linearGradient><rect x=".5" y=".5" width="18" height="19.5" rx="2.5" fill="url(#glowest310261)"/><path d="M4.5 5 L9.5 10 L14.5 5 M4.5 11 L9.5 16 L14.5 11" fill="none" stroke="#fff" stroke-width="2.4"/></svg>
<span class="t" style="left:323.00px;top:261.18px;color:#000;">Lowest</span>
<svg class="b" style="left:376.00px;top:261.20px" width="8.4" height="11.6" viewBox="0 0 16.8 23.2"><linearGradient id="d376_261" x1="0" y1="0" x2="1" y2="1"><stop offset="0" stop-color="#f4f9ff"/><stop offset=".4" stop-color="#d3e5fa"/><stop offset="1" stop-color="#98c0f1"/></linearGradient><path d="M1 1 L10.5 1 L15.8 6.5 L15.8 22.2 L1 22.2 Z" fill="url(#d376_261)" stroke="#8db4ec" stroke-width="1.4"/><path d="M10.5 1 L15.8 6.5 L10.5 6.5 Z" fill="#3f7bd8"/><path d="M1.5 21.6 L15.3 21.6" stroke="#5d93e2" stroke-width="1.6"/></svg>
<span class="t" style="left:387.60px;top:262.68px;color:#000;">Created</span>
<span class="t" style="left:435.60px;top:262.68px;color:#000;">0 %</span>
<svg class="b" style="left:461.70px;top:262.60px" width="11.5" height="9.6" viewBox="0 0 23 19.2"><path d="M11.5 19 L11.5 15 Q11.5 11.5 17 11.5 Q22.5 11.5 22.5 15 L22.5 19 Z" fill="#25a52a"/><path d="M15.3 12 L17 15.5 L18.7 12 Z" fill="#e8f6e8"/><ellipse cx="17" cy="6" rx="5.2" ry="5.7" fill="#34160a"/><ellipse cx="17.2" cy="7.2" rx="3.4" ry="4" fill="#e5561a"/><ellipse cx="16.6" cy="6.4" rx="1.8" ry="2.1" fill="#f4842e"/><path d="M.5 19 L.5 15.5 Q.5 12 6.8 12 Q13 12 13 15.5 L13 19 Z" fill="#2a68dc"/><path d="M5 12.4 L6.8 16.2 L8.6 12.4 Z" fill="#e6eefc"/><ellipse cx="6.8" cy="6.2" rx="5.6" ry="5.9" fill="#ee9a18"/><ellipse cx="6" cy="5.2" rx="3.2" ry="3.4" fill="#fbc04c"/></svg>
<span class="t" style="left:475.60px;top:261.18px;color:#000;">Home</span>
<span class="t" style="left:525.60px;top:261.18px;color:#000;">02.09.2005 17:21:45</span>
<div class="b cb" style="left:38.20px;top:278.40px"></div>
<span class="t" style="left:101.90px;top:277.18px;color:#f0f4fd;transform:scaleX(0.7484);">Assign times per section and speaker(s)</span>
<div class="b pn" style="left:309.40px;top:277.20px"></div>
<span class="t" style="left:323.00px;top:277.18px;color:#f0f4fd;">Normal</span>
<svg class="b" style="left:376.00px;top:277.20px" width="8.4" height="11.6" viewBox="0 0 16.8 23.2"><linearGradient id="d376_277" x1="0" y1="0" x2="1" y2="1"><stop offset="0" stop-color="#f4f9ff"/><stop offset=".4" stop-color="#d3e5fa"/><stop offset="1" stop-color="#98c0f1"/></linearGradient><path d="M1 1 L10.5 1 L15.8 6.5 L15.8 22.2 L1 22.2 Z" fill="url(#d376_277)" stroke="#8db4ec" stroke-width="1.4"/><path d="M10.5 1 L15.8 6.5 L10.5 6.5 Z" fill="#3f7bd8"/><path d="M1.5 21.6 L15.3 21.6" stroke="#5d93e2" stroke-width="1.6"/></svg>
<span class="t" style="left:387.60px;top:278.68px;color:#f0f4fd;">Created</span>
<span class="t" style="left:435.60px;top:278.68px;color:#f0f4fd;">0 %</span>
<svg class="b" style="left:461.70px;top:278.60px" width="11.5" height="9.6" viewBox="0 0 23 19.2"><path d="M11.5 19 L11.5 15 Q11.5 11.5 17 11.5 Q22.5 11.5 22.5 15 L22.5 19 Z" fill="#25a52a"/><path d="M15.3 12 L17 15.5 L18.7 12 Z" fill="#e8f6e8"/><ellipse cx="17" cy="6" rx="5.2" ry="5.7" fill="#34160a"/><ellipse cx="17.2" cy="7.2" rx="3.4" ry="4" fill="#e5561a"/><ellipse cx="16.6" cy="6.4" rx="1.8" ry="2.1" fill="#f4842e"/><path d="M.5 19 L.5 15.5 Q.5 12 6.8 12 Q13 12 13 15.5 L13 19 Z" fill="#2a68dc"/><path d="M5 12.4 L6.8 16.2 L8.6 12.4 Z" fill="#e6eefc"/><ellipse cx="6.8" cy="6.2" rx="5.6" ry="5.9" fill="#ee9a18"/><ellipse cx="6" cy="5.2" rx="3.2" ry="3.4" fill="#fbc04c"/></svg>
<span class="t" style="left:475.60px;top:277.18px;color:#f0f4fd;">Home</span>
<span class="t" style="left:525.60px;top:277.18px;color:#f0f4fd;">02.09.2005 16:34:22</span>
<div class="b cb" style="left:38.20px;top:293.50px"></div>
<span class="t" style="left:101.90px;top:292.28px;color:#000;transform:scaleX(0.7757);">Develop introduction to get audience on board and focused</span>
<svg class="b" style="left:310.00px;top:292.90px" width="9.5" height="10.25" viewBox="0 0 19 20.5"><linearGradient id="ghigh310292" x1="0" y1="0" x2="1" y2="1"><stop offset="0" stop-color="#f4502c"/><stop offset=".55" stop-color="#e0200a"/><stop offset="1" stop-color="#b81405"/></linearGradient><rect x=".5" y=".5" width="18" height="19.5" rx="2.5" fill="url(#ghigh310292)"/><path d="M4 13 L9.5 7 L15 13" fill="none" stroke="#fff" stroke-width="3"/></svg>
<span class="t" style="left:323.00px;top:292.28px;color:#000;">High</span>
<svg class="b" style="left:376.00px;top:292.30px" width="8.4" height="11.6" viewBox="0 0 16.8 23.2"><linearGradient id="d376_292" x1="0" y1="0" x2="1" y2="1"><stop offset="0" stop-color="#f4f9ff"/><stop offset=".4" stop-color="#d3e5fa"/><stop offset="1" stop-color="#98c0f1"/></linearGradient><path d="M1 1 L10.5 1 L15.8 6.5 L15.8 22.2 L1 22.2 Z" fill="url(#d376_292)" stroke="#8db4ec" stroke-width="1.4"/><path d="M10.5 1 L15.8 6.5 L10.5 6.5 Z" fill="#3f7bd8"/><path d="M1.5 21.6 L15.3 21.6" stroke="#5d93e2" stroke-width="1.6"/></svg>
<span class="t" style="left:387.60px;top:293.78px;color:#000;">Created</span>
<span class="t" style="left:435.60px;top:293.78px;color:#000;">0 %</span>
<svg class="b" style="left:461.70px;top:293.70px" width="11.5" height="9.6" viewBox="0 0 23 19.2"><path d="M11.5 19 L11.5 15 Q11.5 11.5 17 11.5 Q22.5 11.5 22.5 15 L22.5 19 Z" fill="#25a52a"/><path d="M15.3 12 L17 15.5 L18.7 12 Z" fill="#e8f6e8"/><ellipse cx="17" cy="6" rx="5.2" ry="5.7" fill="#34160a"/><ellipse cx="17.2" cy="7.2" rx="3.4" ry="4" fill="#e5561a"/><ellipse cx="16.6" cy="6.4" rx="1.8" ry="2.1" fill="#f4842e"/><path d="M.5 19 L.5 15.5 Q.5 12 6.8 12 Q13 12 13 15.5 L13 19 Z" fill="#2a68dc"/><path d="M5 12.4 L6.8 16.2 L8.6 12.4 Z" fill="#e6eefc"/><ellipse cx="6.8" cy="6.2" rx="5.6" ry="5.9" fill="#ee9a18"/><ellipse cx="6" cy="5.2" rx="3.2" ry="3.4" fill="#fbc04c"/></svg>
<span class="t" style="left:475.60px;top:292.28px;color:#000;">Home</span>
<span class="t" style="left:525.60px;top:292.28px;color:#000;">02.09.2005 17:21:46</span>
<div class="b cb" style="left:38.20px;top:309.80px"></div>
<span class="t" style="left:101.90px;top:308.58px;color:#000;transform:scaleX(0.7564);">Develop summary to reiterate main points and ask for the order</span>
<div class="b pn" style="left:309.40px;top:308.60px"></div>
<span class="t" style="left:323.00px;top:308.58px;color:#000;">Normal</span>
<svg class="b" style="left:376.00px;top:308.60px" width="8.4" height="11.6" viewBox="0 0 16.8 23.2"><linearGradient id="d376_308" x1="0" y1="0" x2="1" y2="1"><stop offset="0" stop-color="#f4f9ff"/><stop offset=".4" stop-color="#d3e5fa"/><stop offset="1" stop-color="#98c0f1"/></linearGradient><path d="M1 1 L10.5 1 L15.8 6.5 L15.8 22.2 L1 22.2 Z" fill="url(#d376_308)" stroke="#8db4ec" stroke-width="1.4"/><path d="M10.5 1 L15.8 6.5 L10.5 6.5 Z" fill="#3f7bd8"/><path d="M1.5 21.6 L15.3 21.6" stroke="#5d93e2" stroke-width="1.6"/></svg>
<span class="t" style="left:387.60px;top:310.08px;color:#000;">Created</span>
<span class="t" style="left:435.60px;top:310.08px;color:#000;">0 %</span>
<svg class="b" style="left:461.70px;top:310.00px" width="11.5" height="9.6" viewBox="0 0 23 19.2"><path d="M11.5 19 L11.5 15 Q11.5 11.5 17 11.5 Q22.5 11.5 22.5 15 L22.5 19 Z" fill="#25a52a"/><path d="M15.3 12 L17 15.5 L18.7 12 Z" fill="#e8f6e8"/><ellipse cx="17" cy="6" rx="5.2" ry="5.7" fill="#34160a"/><ellipse cx="17.2" cy="7.2" rx="3.4" ry="4" fill="#e5561a"/><ellipse cx="16.6" cy="6.4" rx="1.8" ry="2.1" fill="#f4842e"/><path d="M.5 19 L.5 15.5 Q.5 12 6.8 12 Q13 12 13 15.5 L13 19 Z" fill="#2a68dc"/><path d="M5 12.4 L6.8 16.2 L8.6 12.4 Z" fill="#e6eefc"/><ellipse cx="6.8" cy="6.2" rx="5.6" ry="5.9" fill="#ee9a18"/><ellipse cx="6" cy="5.2" rx="3.2" ry="3.4" fill="#fbc04c"/></svg>
<span class="t" style="left:475.60px;top:308.58px;color:#000;">Home</span>
<span class="t" style="left:525.60px;top:308.58px;color:#000;">02.09.2005 16:34:22</span>
<div class="b cb" style="left:38.20px;top:325.70px"></div>
<div class="b pn" style="left:309.40px;top:324.50px"></div>
<span class="t" style="left:323.00px;top:324.48px;color:#000;">Normal</span>
<svg class="b" style="left:376.00px;top:324.50px" width="8.4" height="11.6" viewBox="0 0 16.8 23.2"><linearGradient id="d376_324" x1="0" y1="0" x2="1" y2="1"><stop offset="0" stop-color="#f4f9ff"/><stop offset=".4" stop-color="#d3e5fa"/><stop offset="1" stop-color="#98c0f1"/></linearGradient><path d="M1 1 L10.5 1 L15.8 6.5 L15.8 22.2 L1 22.2 Z" fill="url(#d376_324)" stroke="#8db4ec" stroke-width="1.4"/><path d="M10.5 1 L15.8 6.5 L10.5 6.5 Z" fill="#3f7bd8"/><path d="M1.5 21.6 L15.3 21.6" stroke="#5d93e2" stroke-width="1.6"/></svg>
<span class="t" style="left:387.60px;top:325.98px;color:#000;">Created</span>
<span class="t" style="left:435.60px;top:325.98px;color:#000;">0 %</span>
<svg class="b" style="left:461.70px;top:325.90px" width="11.5" height="9.6" viewBox="0 0 23 19.2"><path d="M11.5 19 L11.5 15 Q11.5 11.5 17 11.5 Q22.5 11.5 22.5 15 L22.5 19 Z" fill="#25a52a"/><path d="M15.3 12 L17 15.5 L18.7 12 Z" fill="#e8f6e8"/><ellipse cx="17" cy="6" rx="5.2" ry="5.7" fill="#34160a"/><ellipse cx="17.2" cy="7.2" rx="3.4" ry="4" fill="#e5561a"/><ellipse cx="16.6" cy="6.4" rx="1.8" ry="2.1" fill="#f4842e"/><path d="M.5 19 L.5 15.5 Q.5 12 6.8 12 Q13 12 13 15.5 L13 19 Z" fill="#2a68dc"/><path d="M5 12.4 L6.8 16.2 L8.6 12.4 Z" fill="#e6eefc"/><ellipse cx="6.8" cy="6.2" rx="5.6" ry="5.9" fill="#ee9a18"/><ellipse cx="6" cy="5.2" rx="3.2" ry="3.4" fill="#fbc04c"/></svg>
<span class="t" style="left:475.60px;top:324.48px;color:#000;">Home</span>
<span class="t" style="left:525.60px;top:324.48px;color:#000;">02.09.2005 16:34:22</span>
<div class="b cb" style="left:38.20px;top:341.60px"></div>
<span class="t" style="left:101.90px;top:340.38px;color:#000;transform:scaleX(0.7578);">Determine requirements, guidelines, dictates, standard procedures</span>
<svg class="b" style="left:310.00px;top:341.00px" width="9.5" height="10.25" viewBox="0 0 19 20.5"><linearGradient id="glow310341" x1="0" y1="0" x2="1" y2="1"><stop offset="0" stop-color="#6fd24a"/><stop offset=".55" stop-color="#35b01c"/><stop offset="1" stop-color="#1f8a10"/></linearGradient><rect x=".5" y=".5" width="18" height="19.5" rx="2.5" fill="url(#glow310341)"/><path d="M4 7.5 L9.5 13.5 L15 7.5" fill="none" stroke="#fff" stroke-width="3"/></svg>
<span class="t" style="left:323.00px;top:340.38px;color:#000;">Low</span>
<svg class="b" style="left:376.00px;top:340.40px" width="8.4" height="11.6" viewBox="0 0 16.8 23.2"><linearGradient id="d376_340" x1="0" y1="0" x2="1" y2="1"><stop offset="0" stop-color="#f4f9ff"/><stop offset=".4" stop-color="#d3e5fa"/><stop offset="1" stop-color="#98c0f1"/></linearGradient><path d="M1 1 L10.5 1 L15.8 6.5 L15.8 22.2 L1 22.2 Z" fill="url(#d376_340)" stroke="#8db4ec" stroke-width="1.4"/><path d="M10.5 1 L15.8 6.5 L10.5 6.5 Z" fill="#3f7bd8"/><path d="M1.5 21.6 L15.3 21.6" stroke="#5d93e2" stroke-width="1.6"/></svg>
<span class="t" style="left:387.60px;top:341.88px;color:#000;">Created</span>
<span class="t" style="left:435.60px;top:341.88px;color:#000;">0 %</span>
<svg class="b" style="left:461.70px;top:341.80px" width="11.5" height="9.6" viewBox="0 0 23 19.2"><path d="M11.5 19 L11.5 15 Q11.5 11.5 17 11.5 Q22.5 11.5 22.5 15 L22.5 19 Z" fill="#25a52a"/><path d="M15.3 12 L17 15.5 L18.7 12 Z" fill="#e8f6e8"/><ellipse cx="17" cy="6" rx="5.2" ry="5.7" fill="#34160a"/><ellipse cx="17.2" cy="7.2" rx="3.4" ry="4" fill="#e5561a"/><ellipse cx="16.6" cy="6.4" rx="1.8" ry="2.1" fill="#f4842e"/><path d="M.5 19 L.5 15.5 Q.5 12 6.8 12 Q13 12 13 15.5 L13 19 Z" fill="#2a68dc"/><path d="M5 12.4 L6.8 16.2 L8.6 12.4 Z" fill="#e6eefc"/><ellipse cx="6.8" cy="6.2" rx="5.6" ry="5.9" fill="#ee9a18"/><ellipse cx="6" cy="5.2" rx="3.2" ry="3.4" fill="#fbc04c"/></svg>
<span class="t" style="left:475.60px;top:340.38px;color:#000;">Home</span>
<span class="t" style="left:525.60px;top:340.38px;color:#000;">02.09.2005 17:21:47</span>
<div class="b cb" style="left:38.20px;top:357.50px"></div>
<span class="t" style="left:101.90px;top:356.28px;color:#000;transform:scaleX(0.774);">Find out the 5 W&#x27;s (who, what, when, where, why)</span>
<div class="b pn" style="left:309.40px;top:356.30px"></div>
<span class="t" style="left:323.00px;top:356.28px;color:#000;">Normal</span>
<svg class="b" style="left:376.00px;top:356.30px" width="8.4" height="11.6" viewBox="0 0 16.8 23.2"><linearGradient id="d376_356" x1="0" y1="0" x2="1" y2="1"><stop offset="0" stop-color="#f4f9ff"/><stop offset=".4" stop-color="#d3e5fa"/><stop offset="1" stop-color="#98c0f1"/></linearGradient><path d="M1 1 L10.5 1 L15.8 6.5 L15.8 22.2 L1 22.2 Z" fill="url(#d376_356)" stroke="#8db4ec" stroke-width="1.4"/><path d="M10.5 1 L15.8 6.5 L10.5 6.5 Z" fill="#3f7bd8"/><path d="M1.5 21.6 L15.3 21.6" stroke="#5d93e2" stroke-width="1.6"/></svg>
<span class="t" style="left:387.60px;top:357.78px;color:#000;">Created</span>
<span class="t" style="left:435.60px;top:357.78px;color:#000;">0 %</span>
<svg class="b" style="left:461.70px;top:357.70px" width="11.5" height="9.6" viewBox="0 0 23 19.2"><path d="M11.5 19 L11.5 15 Q11.5 11.5 17 11.5 Q22.5 11.5 22.5 15 L22.5 19 Z" fill="#25a52a"/><path d="M15.3 12 L17 15.5 L18.7 12 Z" fill="#e8f6e8"/><ellipse cx="17" cy="6" rx="5.2" ry="5.7" fill="#34160a"/><ellipse cx="17.2" cy="7.2" rx="3.4" ry="4" fill="#e5561a"/><ellipse cx="16.6" cy="6.4" rx="1.8" ry="2.1" fill="#f4842e"/><path d="M.5 19 L.5 15.5 Q.5 12 6.8 12 Q13 12 13 15.5 L13 19 Z" fill="#2a68dc"/><path d="M5 12.4 L6.8 16.2 L8.6 12.4 Z" fill="#e6eefc"/><ellipse cx="6.8" cy="6.2" rx="5.6" ry="5.9" fill="#ee9a18"/><ellipse cx="6" cy="5.2" rx="3.2" ry="3.4" fill="#fbc04c"/></svg>
<span class="t" style="left:475.60px;top:356.28px;color:#000;">Home</span>
<span class="t" style="left:525.60px;top:356.28px;color:#000;">02.09.2005 16:34:22</span>
<div class="b cb" style="left:38.20px;top:373.40px"></div>
<span class="t" style="left:101.90px;top:372.18px;color:#000;transform:scaleX(0.7678);">Check available expertise that can help you</span>
<div class="b pn" style="left:309.40px;top:372.20px"></div>
<span class="t" style="left:323.00px;top:372.18px;color:#000;">Normal</span>
<svg class="b" style="left:376.00px;top:372.20px" width="8.4" height="11.6" viewBox="0 0 16.8 23.2"><linearGradient id="d376_372" x1="0" y1="0" x2="1" y2="1"><stop offset="0" stop-color="#f4f9ff"/><stop offset=".4" stop-color="#d3e5fa"/><stop offset="1" stop-color="#98c0f1"/></linearGradient><path d="M1 1 L10.5 1 L15.8 6.5 L15.8 22.2 L1 22.2 Z" fill="url(#d376_372)" stroke="#8db4ec" stroke-width="1.4"/><path d="M10.5 1 L15.8 6.5 L10.5 6.5 Z" fill="#3f7bd8"/><path d="M1.5 21.6 L15.3 21.6" stroke="#5d93e2" stroke-width="1.6"/></svg>
<span class="t" style="left:387.60px;top:373.68px;color:#000;">Created</span>
<span class="t" style="left:435.60px;top:373.68px;color:#000;">0 %</span>
<svg class="b" style="left:461.70px;top:373.60px" width="11.5" height="9.6" viewBox="0 0 23 19.2"><path d="M11.5 19 L11.5 15 Q11.5 11.5 17 11.5 Q22.5 11.5 22.5 15 L22.5 19 Z" fill="#25a52a"/><path d="M15.3 12 L17 15.5 L18.7 12 Z" fill="#e8f6e8"/><ellipse cx="17" cy="6" rx="5.2" ry="5.7" fill="#34160a"/><ellipse cx="17.2" cy="7.2" rx="3.4" ry="4" fill="#e5561a"/><ellipse cx="16.6" cy="6.4" rx="1.8" ry="2.1" fill="#f4842e"/><path d="M.5 19 L.5 15.5 Q.5 12 6.8 12 Q13 12 13 15.5 L13 19 Z" fill="#2a68dc"/><path d="M5 12.4 L6.8 16.2 L8.6 12.4 Z" fill="#e6eefc"/><ellipse cx="6.8" cy="6.2" rx="5.6" ry="5.9" fill="#ee9a18"/><ellipse cx="6" cy="5.2" rx="3.2" ry="3.4" fill="#fbc04c"/></svg>
<span class="t" style="left:475.60px;top:372.18px;color:#000;">Home</span>
<span class="t" style="left:525.60px;top:372.18px;color:#000;">02.09.2005 16:34:22</span>
<div class="b cb" style="left:38.20px;top:389.30px"></div>
<span class="t" style="left:101.90px;top:388.08px;color:#000;transform:scaleX(0.7658);">Write out your general objective</span>
<div class="b pn" style="left:309.40px;top:388.10px"></div>
<span class="t" style="left:323.00px;top:388.08px;color:#000;">Normal</span>
<svg class="b" style="left:376.00px;top:388.10px" width="8.4" height="11.6" viewBox="0 0 16.8 23.2"><linearGradient id="d376_388" x1="0" y1="0" x2="1" y2="1"><stop offset="0" stop-color="#f4f9ff"/><stop offset=".4" stop-color="#d3e5fa"/><stop offset="1" stop-color="#98c0f1"/></linearGradient><path d="M1 1 L10.5 1 L15.8 6.5 L15.8 22.2 L1 22.2 Z" fill="url(#d376_388)" stroke="#8db4ec" stroke-width="1.4"/><path d="M10.5 1 L15.8 6.5 L10.5 6.5 Z" fill="#3f7bd8"/><path d="M1.5 21.6 L15.3 21.6" stroke="#5d93e2" stroke-width="1.6"/></svg>
<span class="t" style="left:387.60px;top:389.58px;color:#000;">Created</span>
<span class="t" style="left:435.60px;top:389.58px;color:#000;">0 %</span>
<svg class="b" style="left:461.70px;top:389.50px" width="11.5" height="9.6" viewBox="0 0 23 19.2"><path d="M11.5 19 L11.5 15 Q11.5 11.5 17 11.5 Q22.5 11.5 22.5 15 L22.5 19 Z" fill="#25a52a"/><path d="M15.3 12 L17 15.5 L18.7 12 Z" fill="#e8f6e8"/><ellipse cx="17" cy="6" rx="5.2" ry="5.7" fill="#34160a"/><ellipse cx="17.2" cy="7.2" rx="3.4" ry="4" fill="#e5561a"/><ellipse cx="16.6" cy="6.4" rx="1.8" ry="2.1" fill="#f4842e"/><path d="M.5 19 L.5 15.5 Q.5 12 6.8 12 Q13 12 13 15.5 L13 19 Z" fill="#2a68dc"/><path d="M5 12.4 L6.8 16.2 L8.6 12.4 Z" fill="#e6eefc"/><ellipse cx="6.8" cy="6.2" rx="5.6" ry="5.9" fill="#ee9a18"/><ellipse cx="6" cy="5.2" rx="3.2" ry="3.4" fill="#fbc04c"/></svg>
<span class="t" style="left:475.60px;top:388.08px;color:#000;">Home</span>
<span class="t" style="left:525.60px;top:388.08px;color:#000;">02.09.2005 16:34:22</span>
<div class="b cb" style="left:38.20px;top:405.20px"></div>
<span class="t" style="left:101.90px;top:403.98px;color:#000;transform:scaleX(0.7732);">Write out the specific objective - the end product</span>
<div class="b pn" style="left:309.40px;top:404.00px"></div>
<span class="t" style="left:323.00px;top:403.98px;color:#000;">Normal</span>
<svg class="b" style="left:376.00px;top:404.00px" width="8.4" height="11.6" viewBox="0 0 16.8 23.2"><linearGradient id="d376_404" x1="0" y1="0" x2="1" y2="1"><stop offset="0" stop-color="#f4f9ff"/><stop offset=".4" stop-color="#d3e5fa"/><stop offset="1" stop-color="#98c0f1"/></linearGradient><path d="M1 1 L10.5 1 L15.8 6.5 L15.8 22.2 L1 22.2 Z" fill="url(#d376_404)" stroke="#8db4ec" stroke-width="1.4"/><path d="M10.5 1 L15.8 6.5 L10.5 6.5 Z" fill="#3f7bd8"/><path d="M1.5 21.6 L15.3 21.6" stroke="#5d93e2" stroke-width="1.6"/></svg>
<span class="t" style="left:387.60px;top:405.48px;color:#000;">Created</span>
<span class="t" style="left:435.60px;top:405.48px;color:#000;">0 %</span>
<svg class="b" style="left:461.70px;top:405.40px" width="11.5" height="9.6" viewBox="0 0 23 19.2"><path d="M11.5 19 L11.5 15 Q11.5 11.5 17 11.5 Q22.5 11.5 22.5 15 L22.5 19 Z" fill="#25a52a"/><path d="M15.3 12 L17 15.5 L18.7 12 Z" fill="#e8f6e8"/><ellipse cx="17" cy="6" rx="5.2" ry="5.7" fill="#34160a"/><ellipse cx="17.2" cy="7.2" rx="3.4" ry="4" fill="#e5561a"/><ellipse cx="16.6" cy="6.4" rx="1.8" ry="2.1" fill="#f4842e"/><path d="M.5 19 L.5 15.5 Q.5 12 6.8 12 Q13 12 13 15.5 L13 19 Z" fill="#2a68dc"/><path d="M5 12.4 L6.8 16.2 L8.6 12.4 Z" fill="#e6eefc"/><ellipse cx="6.8" cy="6.2" rx="5.6" ry="5.9" fill="#ee9a18"/><ellipse cx="6" cy="5.2" rx="3.2" ry="3.4" fill="#fbc04c"/></svg>
<span class="t" style="left:475.60px;top:403.98px;color:#000;">Home</span>
<span class="t" style="left:525.60px;top:403.98px;color:#000;">02.09.2005 16:34:22</span>
<div class="b cb" style="left:38.20px;top:421.10px"></div>
<span class="t" style="left:101.90px;top:419.88px;color:#000;transform:scaleX(0.7619);">List factors associated with meeting conditions that might influence</span>
<div class="b pn" style="left:309.40px;top:419.90px"></div>
<span class="t" style="left:323.00px;top:419.88px;color:#000;">Normal</span>
<svg class="b" style="left:376.00px;top:419.90px" width="8.4" height="11.6" viewBox="0 0 16.8 23.2"><linearGradient id="d376_419" x1="0" y1="0" x2="1" y2="1"><stop offset="0" stop-color="#f4f9ff"/><stop offset=".4" stop-color="#d3e5fa"/><stop offset="1" stop-color="#98c0f1"/></linearGradient><path d="M1 1 L10.5 1 L15.8 6.5 L15.8 22.2 L1 22.2 Z" fill="url(#d376_419)" stroke="#8db4ec" stroke-width="1.4"/><path d="M10.5 1 L15.8 6.5 L10.5 6.5 Z" fill="#3f7bd8"/><path d="M1.5 21.6 L15.3 21.6" stroke="#5d93e2" stroke-width="1.6"/></svg>
<span class="t" style="left:387.60px;top:421.38px;color:#000;">Created</span>
<span class="t" style="left:435.60px;top:421.38px;color:#000;">0 %</span>
<svg class="b" style="left:461.70px;top:421.30px" width="11.5" height="9.6" viewBox="0 0 23 19.2"><path d="M11.5 19 L11.5 15 Q11.5 11.5 17 11.5 Q22.5 11.5 22.5 15 L22.5 19 Z" fill="#25a52a"/><path d="M15.3 12 L17 15.5 L18.7 12 Z" fill="#e8f6e8"/><ellipse cx="17" cy="6" rx="5.2" ry="5.7" fill="#34160a"/><ellipse cx="17.2" cy="7.2" rx="3.4" ry="4" fill="#e5561a"/><ellipse cx="16.6" cy="6.4" rx="1.8" ry="2.1" fill="#f4842e"/><path d="M.5 19 L.5 15.5 Q.5 12 6.8 12 Q13 12 13 15.5 L13 19 Z" fill="#2a68dc"/><path d="M5 12.4 L6.8 16.2 L8.6 12.4 Z" fill="#e6eefc"/><ellipse cx="6.8" cy="6.2" rx="5.6" ry="5.9" fill="#ee9a18"/><ellipse cx="6" cy="5.2" rx="3.2" ry="3.4" fill="#fbc04c"/></svg>
<span class="t" style="left:475.60px;top:419.88px;color:#000;">Home</span>
<span class="t" style="left:525.60px;top:419.88px;color:#000;">02.09.2005 16:34:22</span>
<div class="b cb" style="left:38.20px;top:437.00px"></div>
<span class="t" style="left:101.90px;top:435.78px;color:#000;transform:scaleX(0.7598);">Identify and assess audience</span>
<div class="b pn" style="left:309.40px;top:435.80px"></div>
<span class="t" style="left:323.00px;top:435.78px;color:#000;">Normal</span>
<svg class="b" style="left:376.00px;top:435.80px" width="8.4" height="11.6" viewBox="0 0 16.8 23.2"><linearGradient id="d376_435" x1="0" y1="0" x2="1" y2="1"><stop offset="0" stop-color="#f4f9ff"/><stop offset=".4" stop-color="#d3e5fa"/><stop offset="1" stop-color="#98c0f1"/></linearGradient><path d="M1 1 L10.5 1 L15.8 6.5 L15.8 22.2 L1 22.2 Z" fill="url(#d376_435)" stroke="#8db4ec" stroke-width="1.4"/><path d="M10.5 1 L15.8 6.5 L10.5 6.5 Z" fill="#3f7bd8"/><path d="M1.5 21.6 L15.3 21.6" stroke="#5d93e2" stroke-width="1.6"/></svg>
<span class="t" style="left:387.60px;top:437.28px;color:#000;">Created</span>
<span class="t" style="left:435.60px;top:437.28px;color:#000;">0 %</span>
<svg class="b" style="left:461.70px;top:437.20px" width="11.5" height="9.6" viewBox="0 0 23 19.2"><path d="M11.5 19 L11.5 15 Q11.5 11.5 17 11.5 Q22.5 11.5 22.5 15 L22.5 19 Z" fill="#25a52a"/><path d="M15.3 12 L17 15.5 L18.7 12 Z" fill="#e8f6e8"/><ellipse cx="17" cy="6" rx="5.2" ry="5.7" fill="#34160a"/><ellipse cx="17.2" cy="7.2" rx="3.4" ry="4" fill="#e5561a"/><ellipse cx="16.6" cy="6.4" rx="1.8" ry="2.1" fill="#f4842e"/><path d="M.5 19 L.5 15.5 Q.5 12 6.8 12 Q13 12 13 15.5 L13 19 Z" fill="#2a68dc"/><path d="M5 12.4 L6.8 16.2 L8.6 12.4 Z" fill="#e6eefc"/><ellipse cx="6.8" cy="6.2" rx="5.6" ry="5.9" fill="#ee9a18"/><ellipse cx="6" cy="5.2" rx="3.2" ry="3.4" fill="#fbc04c"/></svg>
<span class="t" style="left:475.60px;top:435.78px;color:#000;">Home</span>
<span class="t" style="left:525.60px;top:435.78px;color:#000;">02.09.2005 17:21:28</span>
<div class="b cb" style="left:38.20px;top:452.90px"></div>
<span class="t" style="left:101.90px;top:451.68px;color:#000;transform:scaleX(0.7601);">Develop your presentation strategy</span>
<div class="b pn" style="left:309.40px;top:451.70px"></div>
<span class="t" style="left:323.00px;top:451.68px;color:#000;">Normal</span>
<svg class="b" style="left:376.00px;top:451.70px" width="8.4" height="11.6" viewBox="0 0 16.8 23.2"><linearGradient id="d376_451" x1="0" y1="0" x2="1" y2="1"><stop offset="0" stop-color="#f4f9ff"/><stop offset=".4" stop-color="#d3e5fa"/><stop offset="1" stop-color="#98c0f1"/></linearGradient><path d="M1 1 L10.5 1 L15.8 6.5 L15.8 22.2 L1 22.2 Z" fill="url(#d376_451)" stroke="#8db4ec" stroke-width="1.4"/><path d="M10.5 1 L15.8 6.5 L10.5 6.5 Z" fill="#3f7bd8"/><path d="M1.5 21.6 L15.3 21.6" stroke="#5d93e2" stroke-width="1.6"/></svg>
<span class="t" style="left:387.60px;top:453.18px;color:#000;">Created</span>
<span class="t" style="left:435.60px;top:453.18px;color:#000;">0 %</span>
<svg class="b" style="left:461.70px;top:453.10px" width="11.5" height="9.6" viewBox="0 0 23 19.2"><path d="M11.5 19 L11.5 15 Q11.5 11.5 17 11.5 Q22.5 11.5 22.5 15 L22.5 19 Z" fill="#25a52a"/><path d="M15.3 12 L17 15.5 L18.7 12 Z" fill="#e8f6e8"/><ellipse cx="17" cy="6" rx="5.2" ry="5.7" fill="#34160a"/><ellipse cx="17.2" cy="7.2" rx="3.4" ry="4" fill="#e5561a"/><ellipse cx="16.6" cy="6.4" rx="1.8" ry="2.1" fill="#f4842e"/><path d="M.5 19 L.5 15.5 Q.5 12 6.8 12 Q13 12 13 15.5 L13 19 Z" fill="#2a68dc"/><path d="M5 12.4 L6.8 16.2 L8.6 12.4 Z" fill="#e6eefc"/><ellipse cx="6.8" cy="6.2" rx="5.6" ry="5.9" fill="#ee9a18"/><ellipse cx="6" cy="5.2" rx="3.2" ry="3.4" fill="#fbc04c"/></svg>
<span class="t" style="left:475.60px;top:451.68px;color:#000;">Home</span>
<span class="t" style="left:525.60px;top:451.68px;color:#000;">02.09.2005 16:34:22</span>
<div class="b cb" style="left:38.20px;top:468.80px"></div>
<span class="t" style="left:101.90px;top:467.58px;color:#000;transform:scaleX(0.7602);">Identify resources needed for each task and determine availability</span>
<div class="b pn" style="left:309.40px;top:467.60px"></div>
<span class="t" style="left:323.00px;top:467.58px;color:#000;">Normal</span>
<svg class="b" style="left:376.00px;top:467.60px" width="8.4" height="11.6" viewBox="0 0 16.8 23.2"><linearGradient id="d376_467" x1="0" y1="0" x2="1" y2="1"><stop offset="0" stop-color="#f4f9ff"/><stop offset=".4" stop-color="#d3e5fa"/><stop offset="1" stop-color="#98c0f1"/></linearGradient><path d="M1 1 L10.5 1 L15.8 6.5 L15.8 22.2 L1 22.2 Z" fill="url(#d376_467)" stroke="#8db4ec" stroke-width="1.4"/><path d="M10.5 1 L15.8 6.5 L10.5 6.5 Z" fill="#3f7bd8"/><path d="M1.5 21.6 L15.3 21.6" stroke="#5d93e2" stroke-width="1.6"/></svg>
<span class="t" style="left:387.60px;top:469.08px;color:#000;">Created</span>
<span class="t" style="left:435.60px;top:469.08px;color:#000;">0 %</span>
<svg class="b" style="left:461.70px;top:469.00px" width="11.5" height="9.6" viewBox="0 0 23 19.2"><path d="M11.5 19 L11.5 15 Q11.5 11.5 17 11.5 Q22.5 11.5 22.5 15 L22.5 19 Z" fill="#25a52a"/><path d="M15.3 12 L17 15.5 L18.7 12 Z" fill="#e8f6e8"/><ellipse cx="17" cy="6" rx="5.2" ry="5.7" fill="#34160a"/><ellipse cx="17.2" cy="7.2" rx="3.4" ry="4" fill="#e5561a"/><ellipse cx="16.6" cy="6.4" rx="1.8" ry="2.1" fill="#f4842e"/><path d="M.5 19 L.5 15.5 Q.5 12 6.8 12 Q13 12 13 15.5 L13 19 Z" fill="#2a68dc"/><path d="M5 12.4 L6.8 16.2 L8.6 12.4 Z" fill="#e6eefc"/><ellipse cx="6.8" cy="6.2" rx="5.6" ry="5.9" fill="#ee9a18"/><ellipse cx="6" cy="5.2" rx="3.2" ry="3.4" fill="#fbc04c"/></svg>
<span class="t" style="left:475.60px;top:467.58px;color:#000;">Home</span>
<span class="t" style="left:525.60px;top:467.58px;color:#000;">02.09.2005 16:34:22</span>
<svg class="b" style="left:76.70px;top:151.80px" width="11" height="11" viewBox="0 0 22 22"><path d="M2.5 3.5 L5.5 6 M19.5 3.5 L16.5 6 M1 8.5 L4.5 9 M21 8.5 L17.5 9 M5 1 L6.5 3.5 M17 1 L15.5 3.5" stroke="#ab9258" stroke-width="1.8" fill="none"/><path d="M9.5 .8 L12.5 .8 L12.9 3.6 Q16.8 5.5 17 11.5 L17.3 15.3 L19.8 18.6 L2.2 18.6 L4.7 15.3 L5 11.5 Q5.2 5.5 9.1 3.6 Z" fill="#f4ae1c"/><path d="M12.9 3.6 Q16.8 5.5 17 11.5 L17.3 15.3 L19.8 18.6 L13.5 18.6 Q14.5 10 12.2 3.4 Z" fill="#e08a12"/><path d="M9.6 3.2 Q6.8 7 6.8 14.5 L10 14.5 Q9.6 7 11.4 3.2 Z" fill="#fde58a"/><path d="M3 18.6 L19 18.6 L17.5 16.5 L4.5 16.5 Z" fill="#d9870f"/><ellipse cx="11" cy="19.8" rx="2.3" ry="1.8" fill="#b9650a"/></svg>
<svg class="b" style="left:86.60px;top:167.70px" width="11" height="11.6" viewBox="0 0 22 23.2"><path d="M3 9 L15.5 13 L15.5 22.5 L2.5 22.5 Z" fill="#e3ebf7" stroke="#a9bbd8" stroke-width=".8"/><path d="M.8 22.5 L.8 8 L5 1 L12 1 L21.5 11.5 L18 15.5 L5 8.5 L2.6 22.5 Z" fill="#18921f"/><path d="M6 2.5 L11.5 2.5 L19.5 11.5 L17.5 13.5 L7 7.5 Z" fill="#35b83a"/></svg>
<svg class="b" style="left:55.80px;top:213.00px" width="10.4" height="12" viewBox="0 0 20.8 24"><rect x=".7" y="3.5" width="9" height="17" fill="#cfe0f8" stroke="#8fb2ea" stroke-width="1"/><rect x="5" y="5.5" width="15" height="17.5" fill="#fdf0b4" stroke="#e2b93a" stroke-width="1.3"/><path d="M15.5 5.5 L20 5.5 L20 10 Z" fill="#e9b53a"/><path d="M8.2 8 L8.2 16 Q8.2 19 11 19 Q13.8 19 13.8 16 L13.8 4.5 Q13.8 1 11 1 Q8.2 1 8.2 4.5" fill="none" stroke="#2f66d0" stroke-width="1.8"/><path d="M11 6 L11 15" fill="none" stroke="#5f8fe6" stroke-width="1.6"/></svg>
<svg class="b" style="left:76.70px;top:213.50px" width="11" height="11" viewBox="0 0 22 22"><path d="M2.5 3.5 L5.5 6 M19.5 3.5 L16.5 6 M1 8.5 L4.5 9 M21 8.5 L17.5 9 M5 1 L6.5 3.5 M17 1 L15.5 3.5" stroke="#ab9258" stroke-width="1.8" fill="none"/><path d="M9.5 .8 L12.5 .8 L12.9 3.6 Q16.8 5.5 17 11.5 L17.3 15.3 L19.8 18.6 L2.2 18.6 L4.7 15.3 L5 11.5 Q5.2 5.5 9.1 3.6 Z" fill="#f4ae1c"/><path d="M12.9 3.6 Q16.8 5.5 17 11.5 L17.3 15.3 L19.8 18.6 L13.5 18.6 Q14.5 10 12.2 3.4 Z" fill="#e08a12"/><path d="M9.6 3.2 Q6.8 7 6.8 14.5 L10 14.5 Q9.6 7 11.4 3.2 Z" fill="#fde58a"/><path d="M3 18.6 L19 18.6 L17.5 16.5 L4.5 16.5 Z" fill="#d9870f"/><ellipse cx="11" cy="19.8" rx="2.3" ry="1.8" fill="#b9650a"/></svg>
<div class="b" style="left:101.30px;top:325.00px;width:214.60px;height:14.00px;background:rgba(90,90,80,.35);border-radius:1px"></div>
<div class="b" style="left:99.60px;top:323.00px;width:214.80px;height:14.20px;background:#ffffe1;border:1px solid #8f8f7c;border-top-color:#e4e4cc;border-left-color:#d8d8c0;box-sizing:border-box"></div>
<span class="t" style="left:102.00px;top:325.68px;color:#000;transform:scaleX(0.7607);">Create story board integrating outline with visual aid support concepts</span>
<div class="b" style="left:611.00px;top:15.50px;width:11.00px;height:465.00px;background:#f6f6f1;"></div>
<div class="b" style="left:611.00px;top:27.00px;width:10.50px;height:416.00px;background:linear-gradient(90deg,#d3defb,#c2d1f8 30%,#bccdf7 75%,#a9bbea);"></div>
<div class="b" style="left:611.00px;top:16.00px;width:10.50px;height:10.50px;background:#c4d4f8;border-radius:1px"></div>
<svg class="b" style="left:612.80px;top:18.60px" width="7.4" height="5.6" viewBox="0 0 14.8 11.2"><path d="M1.8 9.4 L7.4 3.4 L13 9.4" fill="none" stroke="#3b4f96" stroke-width="3"/></svg>
<div class="b" style="left:614.00px;top:232.00px;width:5.00px;height:0.90px;background:#dbe4fb;"></div>
<div class="b" style="left:614.00px;top:233.80px;width:5.00px;height:0.90px;background:#dbe4fb;"></div>
<div class="b" style="left:614.00px;top:235.60px;width:5.00px;height:0.90px;background:#dbe4fb;"></div>
<div class="b" style="left:614.00px;top:237.40px;width:5.00px;height:0.90px;background:#dbe4fb;"></div>
<div class="b" style="left:621.30px;top:15.50px;width:1.10px;height:465.00px;background:#a4b3d4;"></div>
<div class="b" style="left:622.40px;top:15.50px;width:1.20px;height:465.00px;background:#eceff7;"></div>
<div class="b" style="left:623.50px;top:15.50px;width:17.00px;height:465.00px;background:#ece9d8;"></div>
<div class="b" style="left:624.00px;top:16.20px;width:17.00px;height:15.20px;background:linear-gradient(#dbe4f9,#d0dbf6);border-radius:2.5px 0 0 2.5px"></div>
<span class="t" style="left:627.30px;top:19.21px;color:#000;font-size:9.5px;">Categories</span>
<div class="b" style="left:624.00px;top:32.50px;width:17.00px;height:158.00px;background:#fff;border:1px solid #a9b9dc;border-right:0;box-sizing:border-box"></div>
<div class="b" style="left:624.50px;top:33.30px;width:17.00px;height:14.00px;background:#fff;border:1px solid #3a3a3a;border-right:0;box-sizing:border-box"></div>
<svg class="b" style="left:626.30px;top:36.20px" width="11.5" height="9.6" viewBox="0 0 23 19.2"><path d="M11.5 19 L11.5 15 Q11.5 11.5 17 11.5 Q22.5 11.5 22.5 15 L22.5 19 Z" fill="#25a52a"/><path d="M15.3 12 L17 15.5 L18.7 12 Z" fill="#e8f6e8"/><ellipse cx="17" cy="6" rx="5.2" ry="5.7" fill="#34160a"/><ellipse cx="17.2" cy="7.2" rx="3.4" ry="4" fill="#e5561a"/><ellipse cx="16.6" cy="6.4" rx="1.8" ry="2.1" fill="#f4842e"/><path d="M.5 19 L.5 15.5 Q.5 12 6.8 12 Q13 12 13 15.5 L13 19 Z" fill="#2a68dc"/><path d="M5 12.4 L6.8 16.2 L8.6 12.4 Z" fill="#e6eefc"/><ellipse cx="6.8" cy="6.2" rx="5.6" ry="5.9" fill="#ee9a18"/><ellipse cx="6" cy="5.2" rx="3.2" ry="3.4" fill="#fbc04c"/></svg>
<div class="b" style="left:624.50px;top:194.50px;width:16.00px;height:15.00px;background:#fbfbf8;border-radius:2px 0 0 2px;border:1px solid #d9d6c8;border-right:0;box-sizing:border-box"></div>
<span class="t" style="left:626.60px;top:197.38px;color:#000;">Filter</span>
<span class="t" style="left:629.8px;top:216.28px;font-weight:bold">Filter</span>
<div class="b" style="left:629.00px;top:228.50px;width:12.00px;height:14.50px;background:#fff;border:1px solid #7f9db9;border-right:0;box-sizing:border-box"></div>
<span class="t" style="left:631.50px;top:231.68px;color:#000;">All</span>
<span class="t" style="left:629.8px;top:250.48px;font-weight:bold">Filter</span>
<svg class="b" style="left:631.00px;top:268.50px" width="4" height="6" viewBox="0 0 8 12"><path d="M7 1 L1 6 L7 11 Z" fill="#000"/></svg>
<div class="b" style="left:627.50px;top:277.00px;width:13.00px;height:1.20px;background:#55534a;"></div>
<div class="b" style="left:634.00px;top:289.00px;width:6.00px;height:0.80px;background:#b5b3a4;"></div>
<div class="b" style="left:636.00px;top:294.00px;width:4.00px;height:0.60px;background:#cfccbd;"></div>
<div class="b" style="left:636.00px;top:298.00px;width:4.00px;height:0.60px;background:#cfccbd;"></div>
<span class="t" style="left:637.30px;top:311.38px;color:#000;">1</span>
<span class="t" style="left:637.30px;top:321.88px;color:#000;">1</span>
<span class="t" style="left:636.80px;top:332.38px;color:#000;">2</span>
<div class="b" style="left:634.00px;top:355.50px;width:6.00px;height:0.80px;background:#a9a693;"></div>
<div class="b" style="left:638.50px;top:361.00px;width:2.00px;height:12.00px;background:#3a5a8c;"></div>
<div class="b" style="left:629.00px;top:384.00px;width:12.00px;height:15.00px;background:#fff;border:1px solid #7f9db9;border-right:0;box-sizing:border-box"></div>
<span class="t" style="left:631.50px;top:386.38px;color:#000;">is</span>
<div class="b" style="left:637.50px;top:388.00px;width:3.00px;height:7.00px;background:#b0aea0;"></div>
<div class="b" style="left:68.20px;top:0.00px;width:14.30px;height:8.60px;background:linear-gradient(#4c98ec,#3b82de 55%,#2d69cb);border-radius:0 0 2px 2px"></div>
<svg class="b" style="left:70.80px;top:0.00px" width="9" height="5" viewBox="0 0 18 10"><path d="M2 -1 L9 6.5 L16 -1" fill="none" stroke="#fff" stroke-width="4"/></svg>
<div class="b" style="left:89.00px;top:0.00px;width:14.30px;height:8.60px;background:linear-gradient(#4c98ec,#3b82de 55%,#2d69cb);border-radius:0 0 2px 2px"></div>
<svg class="b" style="left:91.60px;top:0.00px" width="9" height="5.5" viewBox="0 0 18 11"><path d="M2 9.5 L9 1 L16 9.5" fill="none" stroke="#fff" stroke-width="3.6"/></svg>
<div class="b" style="left:114.30px;top:0.00px;width:14.30px;height:8.60px;background:linear-gradient(#4c98ec,#3b82de 55%,#2d69cb);border-radius:0 0 2px 2px"></div>
<svg class="b" style="left:117.20px;top:0.00px" width="8.4" height="6" viewBox="0 0 16.8 12"><path d="M2 -2.5 L8.4 3.5 L14.8 -2.5 M3 4.5 L8.4 10 L13.8 4.5" fill="none" stroke="#fff" stroke-width="3.2"/></svg>
<div class="b" style="left:135.20px;top:0.00px;width:14.30px;height:8.60px;background:linear-gradient(#4c98ec,#3b82de 55%,#2d69cb);border-radius:0 0 2px 2px"></div>
<svg class="b" style="left:138.10px;top:0.00px" width="8.4" height="6.2" viewBox="0 0 16.8 12.4"><path d="M2.5 11 L8.4 4 L14.3 11 M3.5 -2 L8.4 4 L13.3 -2" fill="none" stroke="#fff" stroke-width="3.2"/></svg>
<div class="b" style="left:62.00px;top:0.00px;width:1.00px;height:10.50px;background:#c9c6b4;"></div>
<div class="b" style="left:63.00px;top:0.00px;width:1.00px;height:10.50px;background:#fbfaf6;"></div>
<div class="b" style="left:108.50px;top:0.00px;width:1.00px;height:10.50px;background:#c9c6b4;"></div>
<div class="b" style="left:109.50px;top:0.00px;width:1.00px;height:10.50px;background:#fbfaf6;"></div>
<div class="b" style="left:189.50px;top:0.00px;width:1.00px;height:10.50px;background:#c9c6b4;"></div>
<div class="b" style="left:190.50px;top:0.00px;width:1.00px;height:10.50px;background:#fbfaf6;"></div>
<div class="b" style="left:257.50px;top:0.00px;width:1.00px;height:10.50px;background:#c9c6b4;"></div>
<div class="b" style="left:258.50px;top:0.00px;width:1.00px;height:10.50px;background:#fbfaf6;"></div>
<div class="b" style="left:335.50px;top:0.00px;width:1.00px;height:10.50px;background:#c9c6b4;"></div>
<div class="b" style="left:336.50px;top:0.00px;width:1.00px;height:10.50px;background:#fbfaf6;"></div>
<div class="b" style="left:2.50px;top:0.00px;width:8.00px;height:8.00px;background:linear-gradient(#fdf3c4,#eef1fa 30%,#e3e9f8);border:0.6px solid #bfcbe8;border-top:0"></div>
<svg class="b" style="left:7.00px;top:0.00px" width="10" height="10" viewBox="0 0 20 20"><circle cx="9.8" cy="8.6" r="8.4" fill="#f1f5fc" stroke="#e64a3a" stroke-width="2"/><path d="M8.5 9.5 L13.5 7" stroke="#2a4a2a" stroke-width="2.4"/></svg>
<svg class="b" style="left:21.50px;top:0.00px" width="13" height="9" viewBox="0 0 26 18"><path d="M1 -2 L1 16 L24 16 L24 -2 Z" fill="#e9eefb" stroke="#b3c2ea" stroke-width="1.4"/><path d="M6 12 L16 -2 L21 -2 L9 13 Z" fill="#8e86c8"/><path d="M6 12 L9 13 L5 15 Z" fill="#b7923a"/></svg>
<svg class="b" style="left:48.00px;top:0.00px" width="10" height="10" viewBox="0 0 20 20"><path d="M1 -2 L3.5 15 Q10 20 16.5 15 L19 -2 Z" fill="#9cc4f4"/><path d="M4 -2 L5.5 14 Q10 17 14.5 14 L16 -2 Z" fill="#d3e6fb"/><path d="M8 -2 L8.5 12 L11 12 L11.5 -2 Z" fill="#eef6ff"/><rect x="8" y="0" width="4" height="2.5" fill="#2c8a3a"/></svg>
<div class="b" style="left:156.50px;top:0.00px;width:22.50px;height:12.00px;background:#fff;border:1px solid #b9b6a4;border-top:0;border-radius:0 0 2px 2px;box-sizing:border-box"></div>
<svg class="b" style="left:158.00px;top:0.00px" width="19" height="10" viewBox="0 0 38 20"><path d="M3 -2 L3 18" stroke="#777" stroke-width="2"/><path d="M8 -4 L30 -4 L36 4 L24 12 L8 9 Z" fill="#1f9a2e"/><path d="M8 6 L22 8 L22 18 L8 18 Z" fill="#c9dcf6" stroke="#7fa2dc" stroke-width="1"/></svg>
<svg class="b" style="left:181.00px;top:6.80px" width="4.5" height="2.6" viewBox="0 0 9 5"><path d="M0 0 L9 0 L4.5 5 Z" fill="#000"/></svg>
<div class="b" style="left:197.00px;top:0.00px;width:13.00px;height:8.30px;background:linear-gradient(#fff,#e6ecf9);border:0.7px solid #ccd6ee;border-top:0;border-bottom:1px solid #9fb0d8"></div>
<div class="b" style="left:216.50px;top:0.00px;width:14.00px;height:8.30px;background:linear-gradient(#fff,#e6ecf9);border:0.7px solid #ccd6ee;border-top:0;border-bottom:1px solid #9fb0d8"></div>
<svg class="b" style="left:218.00px;top:0.00px" width="10" height="6" viewBox="0 0 20 12"><path d="M3 9 L13 -2 L17 -2 L6 10 Z" fill="#e7b04a"/><path d="M3 9 L6 10 L2 12 Z" fill="#6a5a3a"/></svg>
<div class="b" style="left:237.50px;top:0.00px;width:12.00px;height:8.30px;background:linear-gradient(#fff,#e6ecf9);border:0.7px solid #ccd6ee;border-top:0;border-bottom:1px solid #9fb0d8"></div>
<svg class="b" style="left:244.50px;top:0.50px" width="8.5" height="9" viewBox="0 0 17 18"><path d="M2 1 L15 16 M15 1 L2 16" stroke="#ee7560" stroke-width="3"/></svg>
<div class="b" style="left:264.00px;top:0.00px;width:12.50px;height:8.20px;background:linear-gradient(#f7f6f0,#e7e5d8);border:0.7px solid #d2cfbf;border-top:0;border-radius:0 0 2px 2px"></div>
<div class="b" style="left:284.00px;top:0.00px;width:12.50px;height:8.20px;background:linear-gradient(#f7f6f0,#e7e5d8);border:0.7px solid #d2cfbf;border-top:0;border-radius:0 0 2px 2px"></div>
<svg class="b" style="left:267.50px;top:0.00px" width="6" height="5" viewBox="0 0 12 10"><path d="M1 3 L6 -2 L11 3 L8 3 L8 8 L4 8 L4 3 Z" fill="#c9c6b8"/></svg>
<svg class="b" style="left:287.50px;top:0.00px" width="6" height="5.5" viewBox="0 0 12 11"><path d="M4 -2 L8 -2 L8 4 L11 4 L6 9.5 L1 4 L4 4 Z" fill="#c9c6b8"/></svg>
<svg class="b" style="left:305.00px;top:0.00px" width="12" height="8" viewBox="0 0 24 16"><rect x="2" y="-2" width="7" height="16" fill="#bdbbb0"/><rect x="10" y="3" width="12" height="3" fill="#c9c6b8"/><rect x="10" y="8" width="12" height="3" fill="#c9c6b8"/><rect x="10" y="12.5" width="12" height="2.5" fill="#bdbbb0"/></svg>
<svg class="b" style="left:324.50px;top:6.80px" width="4.5" height="2.6" viewBox="0 0 9 5"><path d="M0 0 L9 0 L4.5 5 Z" fill="#000"/></svg>
<div class="b" style="left:342.50px;top:0.00px;width:100.50px;height:7.00px;background:#fff;border:1px solid #d3dbe9;border-top:0;box-sizing:border-box"></div>
<span class="t" style="left:345.50px;top:-5.09px;color:#000;font-size:9.2px;">Default Task View Layout</span>
<div class="b" style="left:432.50px;top:0.00px;width:9.50px;height:6.40px;background:linear-gradient(#cddafb,#b4c6f4);border-radius:0 0 2px 2px"></div>
<svg class="b" style="left:434.00px;top:0.30px" width="6.5" height="4.5" viewBox="0 0 13 9"><path d="M1.5 1 L6.5 6 L11.5 1" fill="none" stroke="#3a5fb8" stroke-width="2.6"/></svg>
<svg class="b" style="left:445.50px;top:0.00px" width="17" height="10.5" viewBox="0 0 34 21"><path d="M2 -2 L2 18 L15 18 L15 -2 Z" fill="#7c8ee6"/><rect x="5" y="8" width="7" height="10" fill="#e6ebfb"/><path d="M15 5 Q20 -4 29 -1 L31 5 L24 8 L23 15 L17 13 Z" fill="#56b656"/><path d="M19 2 L26 1 L25 6 Z" fill="#b9e6b0"/></svg>
<svg class="b" style="left:466.50px;top:0.00px" width="14" height="8" viewBox="0 0 28 16"><path d="M2 -2 L24 14 M24 -6 L4 14" stroke="#b9b7ac" stroke-width="4"/></svg>
<svg class="b" style="left:486.00px;top:6.80px" width="4.5" height="2.6" viewBox="0 0 9 5"><path d="M0 0 L9 0 L4.5 5 Z" fill="#000"/></svg>
</div></body></html>
